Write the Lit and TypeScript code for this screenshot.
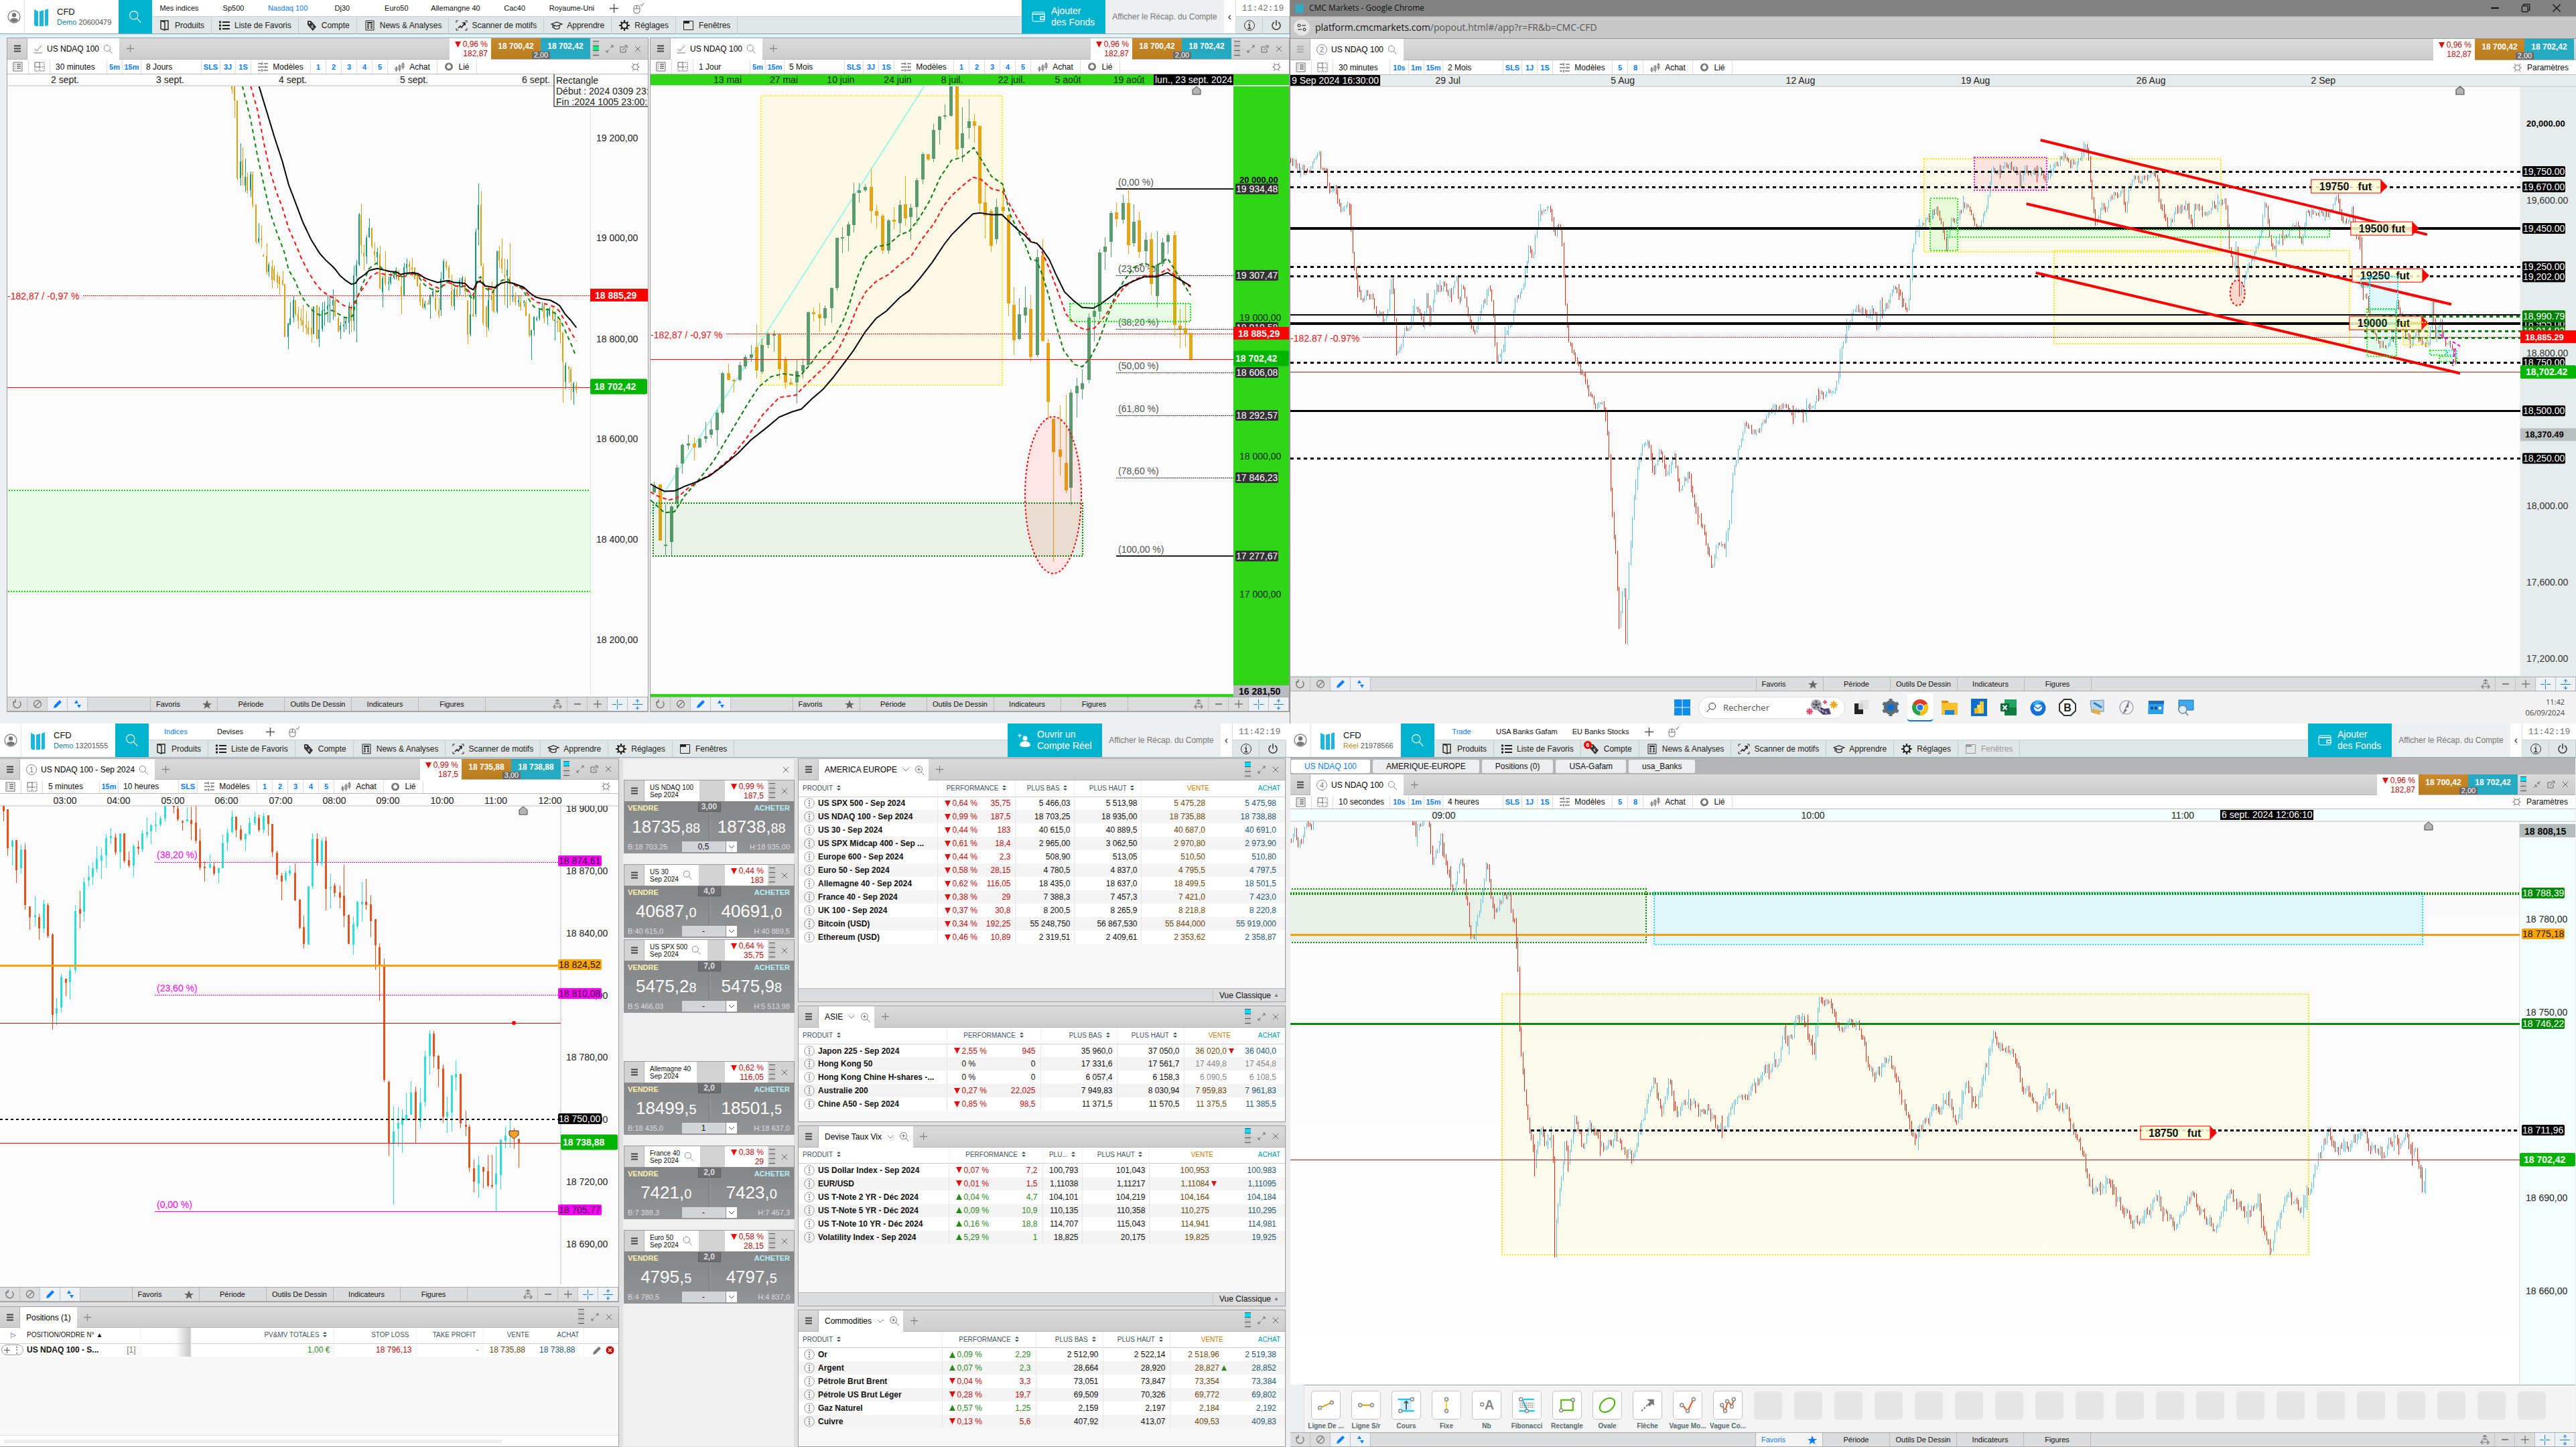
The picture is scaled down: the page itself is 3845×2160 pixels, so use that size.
import { LitElement, html, svg, css, nothing } from "lit";
import { customElement } from "lit/decorators.js";

/* ---------- drawing helpers ---------- */
type Map2 = (x: number, y: number) => [number, number];
const r1 = (n: number) => Math.round(n);

const line = (x1: number, y1: number, x2: number, y2: number, c: string, w = 1, dash = "") =>
  svg`<line x1=${x1} y1=${y1} x2=${x2} y2=${y2} stroke=${c} stroke-width=${w} stroke-dasharray=${dash || nothing} shape-rendering=${y1 === y2 || x1 === x2 ? "crispEdges" : "auto"}></line>`;
const box = (x1: number, y1: number, x2: number, y2: number, fill: string, c = "none", w = 2, op = 0.1) =>
  svg`<rect x=${x1} y=${y1} width=${x2 - x1} height=${y2 - y1} fill=${fill} fill-opacity=${op} stroke=${c} stroke-width=${w} stroke-dasharray="2 2" shape-rendering="crispEdges"></rect>`;
const text = (x: number, y: number, s: string, c = "#222", o: { b?: boolean; a?: string; z?: number } = {}) =>
  svg`<text x=${x} y=${y} fill=${c} font-size=${o.z ?? 14} font-weight=${o.b ? "bold" : "normal"} text-anchor=${o.a ?? "start"}>${s}</text>`;
const tag = (x: number, y: number, s: string, bg: string, c = "#fff", w = 64, h = 16) =>
  svg`<rect x=${x} y=${y - h / 2} width=${w} height=${h} rx="2" fill=${bg}></rect>${text(x + 1, y + 5, s, c)}`;
const bigTag = (x: number, y: number, w: number, s: string, bg: string, c = "#fff", h = 22, pad = 6) =>
  svg`<rect x=${x} y=${y - h / 2} width=${w} height=${h} rx="2" fill=${bg}></rect>${text(x + pad, y + 5, s, c, { b: true })}`;
const curve = (d: string, m: Map2, c: string, dash = "", w = 2) => {
  const pts = d.trim().split(/\s+/).map((p) => {
    const [x, y] = p.split(",").map(Number);
    return m(x, y).map((v) => v.toFixed(1)).join(",");
  }).join(" ");
  return svg`<polyline points=${pts} fill="none" stroke=${c} stroke-width=${w} stroke-dasharray=${dash || nothing}></polyline>`;
};
const marker = (x: number, y: number) =>
  svg`<path d="M${x - 6} ${y + 5}L${x} ${y}L${x + 6} ${y + 5}V${y + 12}H${x - 6}Z" fill="#b4b4b4" stroke="#444" stroke-width="1"></path>`;

/* rows of "x kind high top bottom low" */
const candles = (d: string, m: Map2, colors: Record<string, string>, w: number) => {
  const wick: Record<string, string> = {};
  const body: Record<string, string> = {};
  for (const row of d.trim().split(/\s*[;\n]\s*/)) {
    if (!row) continue;
    const [xs, k, ...v] = row.trim().split(/\s+/);
    const [h, t, b, l] = v.map((n) => r1(m(0, Number(n))[1]));
    const x = r1(m(Number(xs), 0)[0]);
    wick[k] = (wick[k] ?? "") + `M${x + 0.5} ${h}V${l}`;
    body[k] = (body[k] ?? "") + `M${x - Math.floor(w / 2)} ${t}h${w}V${Math.max(b, t + 2)}h${-w}Z`;
  }
  return svg`<g shape-rendering="crispEdges">${Object.keys(wick).map((k) => svg`
    <path d=${wick[k]} stroke=${colors[k]} fill="none"></path><path d=${body[k]} fill=${colors[k]}></path>`)}</g>`;
};

/* one-pixel bars following a list of turning points, with an occasional long bar */
const ticks = (d: string, m: Map2, spread: number, seed: number, step = 2.5) => {
  const pts = d.trim().split(/\s+/).map((p) => { const [x, y] = p.split(",").map(Number); return m(x, y); });
  let s = seed, up = "", down = "", prev = pts[0][1], drift = 0;
  const rnd = () => ((s = (s * 1103515245 + 12345) % 2147483648) / 2147483648);
  let i = 0;
  for (let x = pts[0][0]; x < pts[pts.length - 1][0]; x += step) {
    while (i < pts.length - 2 && x > pts[i + 1][0]) i++;
    const [x0, y0] = pts[i], [x1, y1] = pts[i + 1];
    drift = drift * 0.7 + (rnd() - 0.5) * spread;
    const y = y0 + ((y1 - y0) * (x - x0)) / (x1 - x0) + drift;
    const long = rnd() > 0.88 ? spread : spread * 0.25;
    const a = Math.min(prev, y) - rnd() * long, b = Math.max(prev, y) + rnd() * long;
    const seg = `M${r1(x) + 0.5} ${r1(a)}V${r1(b) + 1}`;
    if (y > prev) down += seg; else up += seg;
    prev = y;
  }
  return svg`<g shape-rendering="crispEdges" fill="none"><path d=${up} stroke="#5cc0e6"></path><path d=${down} stroke="#ee2a12"></path></g>`;
};

/* ---------- icons ---------- */
const ic = (w: number, h: number, body: unknown, vb = `0 0 ${w} ${h}`) =>
  html`<svg class="ic" width=${w} height=${h} viewBox=${vb} fill="none" stroke="currentColor" aria-hidden="true">${body}</svg>`;
const I = {
  user: () => ic(20, 20, svg`<circle cx="10" cy="10" r="9" stroke="#888" stroke-width="1.4"/><circle cx="10" cy="7.5" r="3.2" fill="#777" stroke="none"/><path d="M4 15c1-4 11-4 12 0-3 4-9 4-12 0z" fill="#777" stroke="none"/>`),
  logo: () => ic(22, 26, svg`<g fill="#1bb7dc" stroke="none"><path d="M0 1l6 3v22H2L0 24z"/><path d="M8 4l6-2v24H8z"/><path d="M16 2l5-2v25l-5 1z"/></g>`),
  search: (w = 18) => ic(w, w, svg`<circle cx="7" cy="7" r="5.5"/><path d="M11 11l5.5 6"/>`, "0 0 18 18"),
  zoomIn: () => ic(15, 15, svg`<circle cx="6.5" cy="6.5" r="5"/><path d="M10 10l4.5 5M4 6.5h5M6.500 4v5"/>`),
  mouse: () => ic(17, 17, svg`<rect x="1" y="4" width="9" height="12" rx="4"/><path d="M5.500 4v5M1 9h9M11 3l2 2 3-5" />`),
  book: () => ic(18, 16, svg`<path d="M3 1h11v13H9M3 1l6 2v12l-6-2z" stroke-width="1.4"/>`),
  list: () => ic(18, 16, svg`<path d="M6 3h11M6 8h11M6 13h11" stroke-width="2"/><path d="M1 3h3M1 8h3M1 13h3" stroke-width="3"/>`),
  tagI: () => ic(18, 16, svg`<path d="M3 1h5l8 9-5 6-8-9z" fill="#333" stroke="none"/><circle cx="6" cy="4" r="1.200" fill="#fff" stroke="none"/><path d="M8 8l4 4M11 7l-2 5" stroke="#e0e6e6"/>`),
  news: () => ic(18, 16, svg`<path d="M3 1h12v14H3z"/><path d="M5 4h8" stroke-width="2"/><path d="M5 7h3M10 7h3M5 9.500h3M10 9.500h3M5 12h3M10 12h3" stroke-width="1.500"/>`),
  scan: () => ic(18, 16, svg`<path d="M1 4V1h3M14 1h3v3M17 12v3h-3M4 15H1v-3" /><path d="M4 12l3-3 2 2 5-7M10 4h4v4" stroke-width="1.600"/>`),
  learn: () => ic(18, 16, svg`<path d="M1 6l8-3 8 3-8 3zM5 8v4c2 2 6 2 8 0V8M3 7v5" stroke-width="1.200"/>`),
  gear: (w = 18) => ic(w, 16, svg`<circle cx="9" cy="8" r="4.500" stroke-width="2.200"/><path d="M9 0v3M9 13v3M1 8h3M14 8h3M3.500 2.500l2 2M12.500 11.500l2 2M14.500 2.500l-2 2M5.500 11.500l-2 2" stroke-width="2.200"/>`, "0 0 18 16"),
  gearThin: () => ic(15, 14, svg`<circle cx="7.500" cy="7" r="4"/><path d="M3 1l2 3M12 1l-2 3M3 13l2-3M12 13l-2-3M1 7h2M12 7h2"/>`),
  win: () => ic(18, 16, svg`<path d="M1.500 1.500h14v13h-14z"/><path d="M1 3h9" stroke-width="4"/>`),
  wallet: () => ic(20, 17, svg`<rect x="1" y="1" width="18" height="14" rx="2"/><path d="M1 4h18M13 8h6v4h-6z" stroke-width="1.300"/>`),
  person: () => ic(20, 22, svg`<g fill="#fff" stroke="none"><circle cx="11" cy="8" r="3.500"/><path d="M3 19c0-9 16-9 16 0-4 3-12 3-16 0z"/></g><path d="M3 1v6M0 4h6"/>`),
  info: () => ic(18, 18, svg`<circle cx="9" cy="9" r="7.500"/><path d="M7 7.500h2v6M6.500 13.500h5M8.500 4.500h1.500" stroke-width="1.500"/>`),
  power: () => ic(16, 18, svg`<path d="M5 4a6 6 0 1 0 6 0M8 1v8" stroke-width="1.500"/>`),
  menu: () => ic(10, 11, svg`<path d="M0 1.500h10M0 5.500h10M0 9.500h10" stroke-width="2"/>`),
  check: () => ic(14, 13, svg`<path d="M1 12h12" /><path d="M2 6l3 3 7-8" />`),
  plus: (w = 13) => ic(w, w, svg`<path d="M6.500 0v13M0 6.500h13" stroke-width="1.500"/>`, "0 0 13 13"),
  expand: () => ic(12, 12, svg`<path d="M7 5l4-4M8 1h3v3M5 7l-4 4M1 8v3h3"/>`),
  shrink: () => ic(12, 12, svg`<path d="M7 5l4-4M7 2v3h3M5 7l-4 4M2 7h3v3"/>`),
  pop: () => ic(12, 12, svg`<path d="M7 3H1v8h8V6M4 8l6-6M7 1h4v4"/>`),
  close: () => ic(10, 10, svg`<path d="M1 1l8 8M9 1l-8 8"/>`),
  doc: () => ic(16, 15, svg`<path d="M1 1h13v13H1z"/><path d="M3 4h1M3 7h1M3 10h1M6 4h6M6 7h6M6 10h6" stroke-width="1.300"/>`),
  layout: () => ic(16, 15, svg`<path d="M1 1h7v7H1z"/><path d="M8 1h7v13H1V8M8 8v6M8 8h7" stroke-dasharray="2 1"/>`),
  sliders: () => ic(15, 14, svg`<path d="M0 2h5M9 2h6M0 7h9M12 7h3M0 12h4M8 12h7M6 0v4M11 5v4M6 10v4" stroke-width="1.500"/>`),
  candle: () => ic(15, 14, svg`<path d="M2.500 6v8M1 8h3v4H1zM7.500 3v11M6 5h3v6H6zM12.500 0v11M11 2h3v6h-3z"/>`),
  link: () => ic(14, 13, svg`<circle cx="7" cy="6.500" r="4.500" stroke-width="3"/><path d="M7 6.500V2" stroke="#fff"/>`),
  undo: () => ic(15, 14, svg`<path d="M4 3a5.500 5.500 0 1 0 7 0M5 0v4H1" stroke-width="1.500"/>`),
  ban: () => ic(14, 14, svg`<circle cx="7" cy="7" r="5.500" stroke-width="1.300"/><path d="M11 3l-8 8" stroke-width="1.300"/>`),
  pencil: () => ic(14, 14, svg`<path d="M1 13l1-4 8-8 3 3-8 8z" fill="currentColor" stroke="none"/>`),
  updown: () => ic(12, 14, svg`<path d="M1 6l3-5 3 5zM5 8h6l-3 5z" fill="currentColor" stroke="none"/>`),
  scaleI: () => ic(14, 14, svg`<path d="M7 0v8M4 3l3-3 3 3M3 6h8M1 11h12M4 8l-3 3 3 3M10 8l3 3-3 3" stroke-width="1.200"/>`),
  minus: () => ic(12, 12, svg`<path d="M1 6h10" stroke-width="1.800"/>`),
  cross: () => ic(15, 15, svg`<path d="M7.500 0v6M7.500 9v6M0 7.500h6M9 7.500h6M7 7.500h1"/>`),
  vert: () => ic(15, 15, svg`<path d="M0 7.500h15M7.500 0v5M7.500 10v5M5 3l2.500-3 2.500 3M5 12l2.500 3 2.500-3"/>`),
  star: () => ic(14, 13, svg`<path d="M7 0l2 5h5l-4 3 1.500 5L7 10l-4.500 3L4 8 0 5h5z" fill="currentColor" stroke="none"/>`),
  sort: () => ic(6, 8, svg`<path d="M0 3l3-3 3 3zM0 5h6l-3 3z" fill="currentColor" stroke="none"/>`),
  chev: () => ic(10, 6, svg`<path d="M1 1l4 4 4-4"/>`),
  dots: () => ic(16, 16, svg`<circle cx="8" cy="8" r="7.300" stroke="#999"/><path d="M8 3.500v2M8 7v2M8 10.500v2" stroke="#555" stroke-width="1.500"/>`),
};
const tri = (up: boolean) => ic(9, 9, svg`<path d=${up ? "M4.500 0l4.500 9h-9z" : "M0 0h9l-4.500 9z"} fill=${up ? "#2a8a1a" : "#e01010"} stroke="none"/>`);
const bars = (slot: number, color: string) => ic(9, 24, svg`<rect width="9" height="24" fill="#c6c6c6" stroke="none"/>
  ${slot >= 0 ? svg`<rect y=${slot * 7 + 1} width="9" height="6" fill=${color} stroke="none"/>` : nothing}
  <path d="M0 .5h9M0 7.500h9M0 14.500h9M0 21.500h9" stroke="#555"/>`);

/* ---------- data ---------- */
const OR = "#e0a015", TE = "#169a7c", GR = "#5c9a70", OR2 = "#e6a514";

const C1 = `563 O 372 372 390 407;569 O 372 372 435 512;576 O 437 437 772 780;583 T 621 700 772 803;588 O 640 700 760 805;594 T 688 767 803 832;600 O 750 767 825 838;607 T 744 755 825 853;613 O 744 755 890 900;620 O 885 885 1047 1057;627 T 967 1035 1047 1057;633 O 978 1035 1040 1077;639 O 1100 1105 1108 1110;646 O 1054 1108 1178 1190;652 T 1138 1147 1178 1200;659 O 1127 1155 1214 1248;665 O 1150 1165 1215 1220;672 O 1180 1190 1225 1248;678 O 1195 1200 1230 1278;685 O 1172 1215 1235 1238;691 O 1230 1230 1460 1462;698 T 1400 1402 1460 1512;704 T 1310 1380 1407 1408;711 T 1285 1300 1377 1396;717 O 1300 1300 1362 1370;723 O 1330 1360 1390 1425;730 O 1340 1378 1390 1412;735 O 1322 1387 1410 1440;742 O 1350 1408 1422 1450;748 O 1390 1420 1445 1452;755 O 1330 1420 1450 1484;761 T 1328 1330 1448 1450;768 O 1320 1325 1468 1470;774 T 1330 1430 1468 1503;781 T 1310 1345 1425 1438;787 T 1308 1342 1345 1410;794 T 1285 1325 1342 1396;800 T 1290 1322 1328 1400;807 T 1254 1300 1325 1385;813 O 1290 1300 1370 1375;820 O 1370 1380 1437 1440;826 T 1397 1410 1433 1468;833 T 1370 1408 1412 1440;839 T 1375 1390 1402 1428;846 T 1310 1325 1400 1450;852 O 1320 1330 1390 1440;858 T 1152 1193 1390 1436;865 T 1126 1147 1195 1484;871 T 923 929 1147 1152;876 O 883 932 1063 1100;882 O 1060 1095 1110 1170;889 T 1018 1030 1112 1144;896 T 947 987 1028 1032;902 O 988 988 1070 1078;908 O 1050 1090 1105 1135;915 T 1075 1093 1115 1150;921 O 1066 1100 1250 1255;928 T 1195 1205 1266 1332;935 O 1090 1190 1228 1240;942 T 1200 1222 1228 1260;948 T 1180 1200 1225 1235;955 T 1180 1190 1205 1212;961 T 1160 1170 1190 1212;967 O 1170 1175 1216 1218;973 O 1190 1240 1280 1362;980 T 1140 1160 1278 1285;987 T 1120 1145 1162 1180;993 O 1130 1145 1160 1180;1000 O 1118 1160 1170 1200;1006 O 1160 1160 1210 1212;1012 O 1190 1190 1240 1242;1019 O 1225 1230 1310 1325;1025 O 1290 1295 1332 1338;1031 T 1305 1315 1332 1342;1038 O 1300 1312 1320 1322;1044 T 1275 1285 1318 1382;1050 T 1250 1262 1285 1290;1057 O 1255 1290 1340 1350;1064 O 1290 1345 1367 1380;1070 T 1180 1208 1345 1372;1076 T 1123 1132 1210 1220;1083 O 1130 1135 1160 1172;1089 O 1150 1160 1205 1208;1096 O 1190 1260 1325 1330;1102 T 1245 1255 1327 1345;1109 O 1240 1255 1285 1290;1115 T 1205 1215 1240 1285;1122 T 1195 1205 1235 1240;1128 O 1200 1210 1262 1290;1135 O 1300 1305 1448 1492;1141 T 1270 1363 1448 1458;1148 O 1270 1363 1372 1374;1153 T 990 1005 1363 1375;1160 T 797 890 995 1062;1166 O 828 888 1150 1155;1172 O 1140 1155 1400 1410;1180 O 1325 1330 1418 1460;1185 T 1240 1300 1420 1432;1192 O 1220 1285 1300 1350;1198 O 1240 1255 1350 1355;1205 T 1085 1090 1350 1360;1211 O 1065 1090 1130 1160;1217 O 1035 1120 1165 1185;1224 O 1120 1190 1200 1320;1230 T 1123 1170 1195 1335;1237 O 1055 1200 1230 1325;1243 T 1240 1280 1285 1310;1250 O 1265 1285 1310 1325;1257 T 1280 1300 1310 1330;1263 O 1280 1310 1330 1348;1270 T 1300 1308 1310 1330;1276 O 1300 1310 1370 1372;1283 O 1360 1363 1455 1462;1289 T 1430 1432 1455 1558;1295 T 1370 1375 1432 1455;1302 T 1370 1378 1385 1395;1308 T 1340 1345 1380 1388;1314 T 1310 1335 1342 1350;1320 O 1315 1325 1380 1400;1327 T 1335 1340 1375 1408;1333 T 1330 1340 1365 1372;1340 O 1330 1345 1385 1390;1346 T 1350 1385 1390 1475;1352 O 1370 1390 1400 1440;1358 O 1385 1390 1440 1490;1365 O 1440 1440 1568 1745;1371 T 1570 1584 1656 1687;1379 O 1588 1588 1600 1660;1385 O 1590 1600 1656 1734;1391 T 1656 1660 1698 1753;1397 O 1656 1670 1690 1704`;
const C1K = "628,373 648,490 665,590 685,700 700,800 715,870 735,965 755,1040 775,1097 790,1128 805,1152 812,1165 825,1195 838,1215 852,1232 862,1228 870,1208 885,1190 895,1173 905,1168 915,1164 930,1170 945,1176 962,1180 972,1190 985,1184 1003,1182 1015,1187 1030,1205 1045,1215 1062,1225 1075,1220 1088,1216 1100,1224 1128,1228 1138,1247 1148,1256 1158,1222 1166,1222 1178,1240 1190,1243 1200,1247 1215,1228 1230,1222 1245,1228 1258,1237 1270,1245 1285,1270 1300,1288 1315,1296 1335,1302 1350,1316 1358,1326 1370,1360 1385,1390 1398,1420";
const C1R = "608,373 625,480 640,620 655,740 670,830 685,900 700,990 715,1050 730,1115 748,1180 765,1228 780,1260 800,1285 812,1293 825,1315 838,1328 852,1335 862,1305 870,1275 885,1240 900,1198 915,1182 935,1190 960,1193 975,1202 1000,1187 1012,1190 1030,1215 1048,1238 1065,1250 1088,1224 1105,1240 1128,1240 1140,1270 1148,1280 1158,1225 1166,1215 1180,1250 1198,1255 1215,1228 1230,1222 1250,1238 1270,1250 1285,1285 1300,1310 1325,1318 1345,1330 1355,1345 1370,1390 1385,1440 1398,1478";
const C1G = "588,373 608,520 625,680 640,800 655,920 672,1010 690,1095 700,1170 715,1215 730,1280 745,1320 760,1350 775,1366 790,1360 805,1345 820,1360 838,1378 855,1370 865,1300 880,1230 895,1165 913,1140 930,1170 945,1178 960,1188 975,1200 990,1186 1003,1184 1015,1200 1030,1235 1045,1252 1062,1265 1075,1235 1088,1220 1105,1240 1128,1244 1140,1285 1148,1300 1158,1210 1166,1200 1178,1250 1195,1268 1205,1235 1218,1215 1230,1208 1245,1230 1265,1250 1280,1290 1295,1330 1310,1340 1330,1342 1348,1360 1360,1390 1370,1430 1385,1490 1397,1545";

const C2 = `26 G 2088 2103 2135 2138;40 O 2100 2100 2343 2343;54 G 2188 2361 2368 2408;68 G 2190 2196 2348 2408;82 G 2016 2028 2180 2208;95 G 1923 1928 2011 2053;109 G 1886 1922 1931 1948;123 O 1896 1922 1941 1995;137 G 1900 1902 1940 1940;151 G 1830 1890 1901 1920;164 G 1820 1861 1886 1898;178 G 1778 1790 1863 1933;192 G 1613 1618 1788 1798;206 O 1578 1618 1648 1650;220 O 1640 1646 1650 1701;234 G 1568 1583 1648 1651;247 G 1540 1548 1588 1600;261 G 1495 1536 1550 1568;275 O 1408 1505 1606 1640;288 G 1470 1495 1613 1620;303 G 1440 1448 1495 1510;317 G 1432 1448 1452 1526;330 O 1450 1450 1600 1640;344 O 1545 1560 1658 1685;358 O 1640 1658 1666 1668;372 G 1560 1610 1658 1748;386 G 1555 1583 1608 1640;400 G 1350 1353 1583 1585;413 O 1333 1353 1363 1390;428 O 1312 1362 1378 1437;441 G 1325 1335 1378 1412;456 G 1245 1249 1335 1400;469 G 1030 1032 1248 1260;483 G 985 1027 1035 1098;497 G 962 973 1023 1090;511 G 793 838 975 1008;524 G 793 825 837 877;538 G 800 810 825 830;552 O 730 810 915 968;566 O 888 914 935 990;580 O 925 934 1086 1100;594 G 950 955 1086 1102;608 O 897 952 962 992;622 G 867 890 967 1010;636 O 764 886 947 978;649 G 883 900 942 1040;663 G 773 781 897 977;677 G 660 668 778 800;691 O 668 668 690 696;704 G 536 563 688 702;718 G 503 505 563 628;732 G 453 499 505 518;746 G 374 376 502 504;760 O 374 376 648 680;774 G 465 578 642 702;789 G 430 526 555 600;802 O 494 526 546 618;816 O 543 546 883 915;829 O 795 878 934 1034;844 O 905 915 1065 1092;857 G 862 897 1038 1056;872 O 795 897 915 932;885 O 930 932 1315 1372;899 O 1243 1321 1474 1540;912 G 1292 1362 1468 1474;927 G 1243 1333 1368 1400;940 O 1278 1340 1547 1568;955 G 1080 1115 1540 1548;968 O 1038 1105 1477 1480;982 O 1470 1487 1741 1818;995 O 1815 1815 1960 2433;1011 O 1758 1948 1980 2063;1025 O 1710 2008 2126 2136;1037 G 1688 1703 2113 2190;1052 G 1638 1673 1706 1808;1064 G 1600 1661 1686 1731;1080 G 1360 1376 1646 1660;1093 G 1315 1348 1375 1480;1107 G 1080 1095 1350 1385;1120 G 1028 1070 1092 1170;1135 G 915 923 1048 1116;1148 O 877 920 950 985;1163 G 845 880 952 970;1176 O 820 880 1062 1102;1190 G 885 960 1053 1070;1203 O 918 955 1092 1118;1218 G 1008 1040 1088 1160;1231 O 1008 1037 1230 1282;1246 G 1003 1148 1285 1332;1260 G 1030 1050 1143 1155;1273 G 1010 1020 1048 1100;1288 O 1003 1020 1408 1458;1301 O 1340 1411 1425 1510;1315 O 1318 1423 1445 1503;1328 O 1443 1443 1560 1562`;
const C2K = "18,2098 32,2113 52,2130 76,2128 101,2108 131,2088 161,2063 191,2023 231,1963 261,1908 300,1853 330,1808 360,1786 384,1773 410,1728 436,1688 460,1638 490,1568 510,1520 538,1440 565,1380 590,1348 622,1290 645,1260 672,1205 700,1140 730,1060 748,1018 775,970 800,927 817,923 845,931 870,930 890,965 912,1002 925,1018 940,1048 955,1055 970,1085 985,1125 1000,1185 1022,1265 1045,1305 1065,1333 1092,1336 1112,1315 1140,1278 1162,1242 1190,1218 1215,1200 1245,1200 1272,1182 1300,1210 1328,1240";
const C2R = "18,2133 32,2148 62,2168 82,2158 111,2113 141,2078 171,2048 211,1988 251,1898 290,1798 330,1723 370,1713 400,1658 430,1608 452,1568 475,1510 495,1440 520,1330 540,1265 565,1220 595,1190 622,1148 650,1110 675,1040 705,970 728,895 748,848 775,805 800,768 820,778 845,818 872,830 890,890 912,960 940,1045 960,1060 985,1165 1005,1260 1025,1360 1050,1412 1072,1430 1095,1422 1120,1370 1145,1300 1165,1248 1190,1215 1215,1195 1245,1195 1272,1165 1300,1210 1328,1245";
const C2G = "18,2168 52,2223 76,2218 101,2148 131,2088 171,1998 211,1878 251,1758 280,1678 310,1633 340,1620 380,1630 406,1578 430,1520 460,1475 485,1390 500,1320 520,1200 540,1115 565,1070 595,1060 622,1018 645,1003 670,945 695,870 720,770 748,695 775,680 802,640 830,720 845,765 872,798 890,930 912,1010 928,1065 940,1125 955,1130 970,1200 985,1290 1000,1400 1020,1520 1046,1580 1065,1590 1085,1550 1105,1480 1125,1380 1145,1280 1165,1220 1190,1160 1215,1140 1240,1158 1272,1120 1300,1200 1328,1280";

const C3A = "10,690 30,730 50,760 65,690 78,660 82,720 97,720 100,820 115,830 125,890 135,900 150,910 156,990 163,1150 170,1230 180,1310 192,1260 210,1290 222,1370 240,1400 246,1370 253,1200 258,1260 266,1510 280,1450 300,1400 312,1310 322,1320 332,1400 340,1270 347,1390 360,1250 370,1240 385,1225 392,1290 410,1240 413,1190 418,1340 424,1220 432,1290 445,1360 456,1400 470,1310 485,1270 495,1260 502,1400 508,1560 515,1520 520,1560 530,1450 545,1390 555,1300 573,1290 580,1180 588,1080 598,1140 603,1030 612,930 622,950 632,920 640,940 650,1020 658,970 666,1000 670,1130 676,1330 682,1470 690,1530 700,1560 712,1600 728,1650 750,1740 770,1780 780,1950 788,2200 798,2400 806,2740 818,2500 822,2790 830,2440 845,2120 860,1960 878,1900 890,2060 905,1960 920,2080 940,1990 955,2130 975,2060 990,2180 1010,2280 1030,2440 1045,2360 1060,2400 1075,2280 1080,2080 1095,1940 1110,1860 1135,1900 1155,1850 1175,1790 1200,1760 1240,1770 1280,1740 1310,1700 1330,1680 1345,1530 1350,1480 1358,1400 1370,1350 1400,1350 1415,1360 1430,1360 1433,1480 1440,1330 1443,1400 1455,1340 1470,1280 1478,1265 1490,1300 1505,1340 1512,1240 1516,1060 1525,990 1540,960 1555,930 1565,920 1575,890 1585,940 1595,1000 1598,1060 1610,930 1620,930 1635,890 1650,890 1660,960 1670,980 1685,960 1695,900 1705,780 1710,720 1730,710 1745,690 1760,710 1772,740 1778,800 1788,740 1800,780 1825,740 1840,770 1850,740 1860,700 1870,700 1885,665 1900,710 1915,690 1938,620 1945,700 1950,830 1960,950 1975,900 1995,870 2015,830 2025,830 2032,900 2045,780 2060,790 2075,770 2095,735 2110,790 2115,920 2135,970 2150,930 2175,890 2185,900 2195,980 2200,880 2215,880 2228,940 2240,910 2260,870 2278,900 2285,1090 2295,1150 2302,1050 2307,1280 2325,1200 2345,1100 2360,1000 2372,870 2385,1100 2400,1050 2420,1020 2435,970 2450,980 2458,1060 2472,910 2490,910 2505,930 2520,920 2535,890 2545,865 2560,940 2575,920 2582,890 2590,1010 2603,1010 2607,1240 2618,1280 2625,1400 2640,1480 2655,1500 2670,1520 2685,1480 2690,1300 2700,1350 2710,1440 2725,1480 2750,1450 2770,1520 2777,1300 2785,1480 2795,1390 2810,1500 2825,1490 2837,1580";

const C4A = "1927,1254 1932,1238 1937,1262 1942,1254 1948,1238 1957,1238 1962,1220";
const C4B = "2105,1220 2114,1250 2118,1230 2132,1234 2136,1288 2142,1277 2149,1262 2157,1281 2166,1318 2169,1330 2175,1296 2182,1292 2186,1327 2190,1342 2194,1399 2200,1388 2206,1357 2212,1327 2217,1288 2222,1308 2226,1342 2234,1369 2240,1350 2246,1334 2252,1323 2257,1365 2262,1384 2265,1434 2267,1514 2271,1576 2276,1630 2286,1690 2290,1740 2295,1700 2300,1690 2308,1716 2315,1690 2318,1740 2320,1868 2323,1800 2328,1760 2335,1700 2340,1735 2350,1680 2361,1715 2372,1690 2385,1690 2395,1715 2410,1700 2425,1715 2435,1728 2445,1690 2455,1650 2470,1620 2480,1660 2492,1625 2505,1660 2520,1640 2535,1665 2550,1650 2565,1690 2580,1670 2600,1640 2625,1615 2640,1600 2655,1590 2662,1545 2668,1560 2680,1520 2692,1530 2700,1545 2708,1570 2714,1480 2722,1490 2732,1485 2740,1510 2755,1535 2775,1530 2790,1600 2805,1600 2820,1570 2835,1620 2850,1680 2860,1705 2870,1675 2890,1660 2905,1640 2920,1660 2935,1620 2950,1650 2962,1600 2975,1545 2990,1560 3005,1580 3020,1630 3040,1650 3055,1620 3070,1650 3085,1660 3100,1700 3115,1760 3130,1790 3145,1770 3160,1800 3180,1825 3200,1820 3215,1780 3230,1810 3250,1835 3270,1790 3290,1820 3310,1835 3330,1790 3350,1810 3370,1790 3388,1865 3400,1810 3415,1790 3435,1810 3450,1770 3462,1730 3475,1690 3490,1710 3510,1700 3530,1690 3545,1715 3560,1720 3575,1700 3590,1710 3605,1720 3615,1775 3622,1745";

const C5 = `8 R 489 489 513 557;19 R 503 503 678 710;30 C 640 645 671 755;41 R 642 642 777 833;53 C 663 684 768 792;63 R 657 684 934 954;75 R 939 939 986 1043;87 C 894 978 986 1030;97 R 972 987 1038 1088;109 C 909 927 1037 1060;120 R 924 933 1070 1080;131 R 1059 1065 1425 1490;142 C 1350 1395 1419 1469;154 C 1242 1253 1392 1412;166 R 1263 1263 1282 1340;176 C 1210 1227 1278 1355;188 C 933 960 1224 1239;200 R 870 951 972 1037;210 C 810 830 963 1005;222 C 756 808 822 850;233 C 741 767 807 843;243 C 669 726 772 786;255 C 678 711 734 815;267 C 615 633 710 766;279 C 588 625 633 660;290 R 612 630 696 708;301 C 612 612 695 770;312 R 612 612 735 745;323 R 694 732 756 766;335 C 660 668 756 806;347 R 645 672 681 708;357 C 597 612 684 695;369 C 540 605 618 632;380 C 570 577 603 660;391 C 516 572 576 605;403 C 534 546 573 581;414 C 489 489 547 560;436 R 489 489 495 522;447 R 489 500 550 558;459 R 552 558 561 600;470 C 495 549 558 560;481 R 492 552 570 642;493 R 489 564 645 656;503 R 591 645 765 777;515 R 738 761 765 828;527 C 705 750 765 770;538 R 741 758 792 802;549 C 765 768 789 834;560 C 618 654 768 768;572 C 591 609 651 690;583 C 510 537 605 612;594 R 537 537 597 630;606 R 576 594 639 645;617 C 612 615 640 690;628 C 540 564 614 620;640 C 513 537 567 575;650 R 528 543 597 606;662 C 519 534 597 612;674 R 531 531 570 620;685 R 570 570 696 716;696 R 690 699 798 818;708 R 788 800 828 912;719 C 780 790 818 828;729 C 756 778 792 805;741 R 747 789 912 914;753 R 906 909 1035 1041;763 R 981 1032 1106 1128;775 C 849 849 1109 1109;786 C 612 636 850 861;798 R 612 636 740 756;809 C 633 645 746 758;820 R 627 645 861 957;832 C 795 851 855 948;842 R 834 846 879 896;854 R 846 876 899 948;865 R 753 891 981 1032;876 R 976 978 1106 1106;888 C 987 1017 1109 1155;899 C 915 918 1030 1038;911 C 831 918 930 1005;921 R 816 918 933 955;933 R 888 930 1005 1077;945 R 996 996 1113 1224;955 R 1104 1122 1205 1362;966 R 1173 1205 1715 1724;978 R 1719 1725 2000 2054;989 C 1833 1947 2005 2274;1001 C 1840 1908 1935 2013;1012 C 1849 1885 1917 2042;1022 C 1773 1872 1896 1896;1034 C 1722 1774 1872 1872;1046 R 1746 1770 1895 2000;1057 C 1752 1818 1905 1936;1069 C 1588 1610 1814 1835;1080 C 1494 1510 1608 1692;1091 R 1497 1510 1610 1662;1102 R 1605 1609 1668 1750;1114 R 1647 1664 1881 1907;1125 C 1792 1860 1881 1952;1136 C 1695 1695 1863 1947;1147 C 1629 1688 1703 1764;1159 R 1688 1688 1911 1932;1171 R 1854 1917 1926 1967;1181 R 1917 1925 2108 2126;1192 R 2073 2112 2172 2220;1204 C 2058 2097 2180 2243;1215 R 2106 2106 2126 2203;1227 R 2052 2123 2190 2197;1238 R 2053 2187 2192 2203;1248 C 2013 2135 2184 2305;1260 C 1982 1982 2141 2207;1272 C 1926 1965 1989 2023;1283 C 1895 1955 1967 2018;1294 R 1932 1950 1976 2025;1305 R 1980 1980 1999 2108`;

interface Row { n: string; p: string; v: string; lo: string; hi: string; b: string; a: string; t?: number }
const row = (s: string): Row => { const [n, p, v, lo, hi, b, a, t] = s.split("|"); return { n, p, v, lo, hi, b, a, t: t ? Number(t) : undefined }; };
const LISTS = [
  { name: "AMERICA EUROPE", cls: "l1", cols: [207, 117, 88, 100, 108, 106], bas: "PLUS BAS", foot: true, rows: [
    "US SPX 500 - Sep 2024|-0,64 %|35,75|5 466,03|5 513,98|5 475,28|5 475,98", "US NDAQ 100 - Sep 2024|-0,99 %|187,5|18 703,25|18 935,00|18 735,88|18 738,88",
    "US 30 - Sep 2024|-0,44 %|183|40 615,0|40 889,5|40 687,0|40 691,0", "US SPX Midcap 400 - Sep ...|-0,61 %|18,4|2 965,00|3 062,50|2 970,80|2 973,90",
    "Europe 600 - Sep 2024|-0,44 %|2,3|508,90|513,05|510,50|510,80", "Euro 50 - Sep 2024|-0,58 %|28,15|4 780,5|4 837,0|4 795,5|4 797,5",
    "Allemagne 40 - Sep 2024|-0,62 %|116,05|18 435,0|18 637,0|18 499,5|18 501,5", "France 40 - Sep 2024|-0,38 %|29|7 388,3|7 457,3|7 421,0|7 423,0",
    "UK 100 - Sep 2024|-0,37 %|30,8|8 200,5|8 265,9|8 218,8|8 220,8", "Bitcoin (USD)|-0,34 %|192,25|55 248,750|56 867,530|55 844,000|55 919,000",
    "Ethereum (USD)|-0,46 %|10,89|2 319,51|2 409,61|2 353,62|2 358,87"].map(row) },
  { name: "ASIE", cls: "l2", cols: [221, 140, 114, 100, 77, 74], bas: "PLUS BAS", foot: false, rows: [
    "Japon 225 - Sep 2024|-2,55 %|945|35 960,0|37 050,0|36 020,0|36 040,0|-1", "Hong Kong 50|0 %|0|17 331,6|17 561,7|17 449,8|17 454,8",
    "Hong Kong Chine H-shares -...|0 %|0|6 057,4|6 158,3|6 090,5|6 108,5", "Australie 200|-0,27 %|22,025|7 949,83|8 030,94|7 959,83|7 961,83",
    "Chine A50 - Sep 2024|-0,85 %|98,5|11 371,5|11 570,5|11 375,5|11 385,5"].map(row) },
  { name: "Devise Taux Vix", cls: "l3", cols: [224, 140, 60, 100, 102, 100], bas: "PLU...", foot: true, rows: [
    "US Dollar Index - Sep 2024|-0,07 %|7,2|100,793|101,043|100,953|100,983", "EUR/USD|-0,01 %|1,5|1,11038|1,11217|1,11084|1,11095|-1",
    "US T-Note 2 YR - Déc 2024|+0,04 %|4,7|104,101|104,219|104,164|104,184", "US T-Note 5 YR - Déc 2024|+0,09 %|10,9|110,135|110,358|110,275|110,295",
    "US T-Note 10 YR - Déc 2024|+0,16 %|18,8|114,707|115,043|114,941|114,981", "Volatility Index - Sep 2024|+5,29 %|1|18,825|20,175|19,825|19,925"].map(row) },
  { name: "Commodities", cls: "l4", cols: [214, 140, 100, 100, 87, 85], bas: "PLUS BAS", foot: false, rows: [
    "Or|+0,09 %|2,29|2 512,90|2 522,14|2 518,96|2 519,38", "Argent|+0,07 %|2,3|28,664|28,920|28,827|28,852|1",
    "Pétrole Brut Brent|-0,04 %|3,3|73,051|73,847|73,354|73,384", "Pétrole US Brut Léger|-0,28 %|19,7|69,509|70,326|69,772|69,802",
    "Gaz Naturel|+0,57 %|1,25|2,159|2,197|2,184|2,192", "Cuivre|-0,13 %|5,6|407,92|413,07|409,53|409,83"].map(row) },
];
const TICKETS = [
  ["US NDAQ 100", "0,99 %", "187,5", "3,00", "18735,", "88", "18738,", "88", "18 703,25", "18 935,00", "0,5", "", "lead"],
  ["US 30", "0,44 %", "183", "4,0", "40687,", "0", "40691,", "0", "40 615,0", "40 889,5", "-", "m", "near"],
  ["US SPX 500", "0,64 %", "35,75", "7,0", "5475,2", "8", "5475,9", "8", "5 466,03", "5 513,98", "-", "m", "tight"],
  ["Allemagne 40", "0,62 %", "116,05", "2,0", "18499,", "5", "18501,", "5", "18 435,0", "18 637,0", "1", "", "far"],
  ["France 40", "0,38 %", "29", "2,0", "7421,", "0", "7423,", "0", "7 388,3", "7 457,3", "-", "m", "near"],
  ["Euro 50", "0,58 %", "28,15", "2,0", "4795,", "5", "4797,", "5", "4 780,5", "4 837,0", "-", "m", "near"],
];

/* ---------- shared page parts ---------- */
const topBar = (o: { acc: string; no: string; real?: boolean; tabs: string[]; active: number; cta: [string, string]; person?: boolean; inset?: boolean; badge?: string; dimWin?: boolean }) => html`
  <header class="top ${o.inset ? "inset" : ""}">
    <button class="user" aria-label="Profil">${I.user()}</button>
    <div class="brand ${o.real ? "narrow" : ""}">${I.logo()}<div><div class="cfd">CFD</div><div class="acc"><span class=${o.real ? "real" : "demo"}>${o.acc}</span> ${o.no}</div></div></div>
    <button class="find" aria-label="Rechercher">${I.search(20)}</button>
    <div class="mid">
      <nav class="tabs">${o.tabs.map((t, i) => html`<button class=${i === o.active ? "on" : ""}>${t}</button>`)}
        <button class="add" aria-label="Ajouter">${I.plus(13)}</button><span class="mouse">${I.mouse()}</span></nav>
      <nav class="nav">
        <a href="#">${I.book()}Produits</a><a href="#">${I.list()}Liste de Favoris</a>
        <a href="#">${o.badge ? html`<b class="badge">${o.badge}</b>` : nothing}${I.tagI()}Compte</a>
        <a href="#">${I.news()}News &amp; Analyses</a><a href="#">${I.scan()}Scanner de motifs</a>
        <a href="#">${I.learn()}Apprendre</a><a href="#">${I.gear()}Réglages</a>
        <a href="#" class=${o.dimWin ? "dim" : ""}>${I.win()}Fenêtres</a>
      </nav>
    </div>
    <button class="cta ${o.person ? "wide" : ""}">${o.person ? I.person() : I.wallet()}<span>${o.cta[0]}<br>${o.cta[1]}</span></button>
    <button class="recap">Afficher le Récap. du Compte</button>
    <button class="fold" aria-label="Replier">‹</button>
    <div class="clock"><time>11:42:19</time><div><button aria-label="Informations">${I.info()}</button><button aria-label="Quitter">${I.power()}</button></div></div>
  </header>`;

const chartHead = (o: { name: string; num?: string; pct: string; val: string; bid: string; ask: string; spread: string; slot?: number; color?: string; tools?: boolean; plus?: boolean; full?: boolean }) => html`
  <div class="head">
    <button class="menu ${o.plus === false ? "faint" : ""}" aria-label="Menu">${I.menu()}</button>
    <div class="tab">${o.num ? html`<i class="num">${o.num}</i>` : I.check()}<span>${o.name}</span>${I.search(15)}</div>
    ${o.plus === false ? nothing : html`<button class="plus" aria-label="Ajouter">${I.plus(11)}</button>`}
    <div class="grow"></div>
    <div class="pct"><div>${tri(false)}${o.pct}</div><div>${o.val}</div></div>
    <div class="quotes"><button class="bid">${o.bid}</button><button class="ask">${o.ask}</button><span class="spread">${o.spread}</span></div>
    ${o.tools === false ? html`<div class="end"></div>` : html`<div class="tools">${bars(o.slot ?? -1, o.color ?? "#00dcff")}
      <button aria-label="Agrandir">${o.full ? I.shrink() : I.expand()}</button><button aria-label="Détacher">${I.pop()}</button><button aria-label="Fermer">${I.close()}</button></div>`}
  </div>`;

const toolBar = (o: { tf: string; q1: string[]; range: string; q2: string[]; models: string[]; param?: boolean }) => {
  const q = (s: string) => html`<button class="q ${s.length > 2 ? "q3" : ""}">${s}</button>`;
  return html`<div class="bar">
    <button class="i" aria-label="Liste">${I.doc()}</button><button class="i" aria-label="Disposition">${I.layout()}</button>
    <select class="tf" aria-label="Intervalle"><option>${o.tf}</option></select>${o.q1.map(q)}
    <select class="rg" aria-label="Période"><option>${o.range}</option></select>${o.q2.map(q)}
    <button class="w md">${I.sliders()}Modèles</button>${o.models.map(q)}
    <button class="w ac">${I.candle()}Achat</button><button class="w li">${I.link()}Lié</button>
    <span class="grow"></span><button class="param">${I.gearThin()}${o.param ? html`<span>Paramètres</span>` : nothing}</button>
  </div>`;
};

const footBar = (fav = false) => html`
  <div class="foot">
    <button class="c" aria-label="Réinitialiser">${I.undo()}</button><button class="c" aria-label="Masquer">${I.ban()}</button>
    <button class="c lit" aria-label="Dessiner">${I.pencil()}</button><button class="c lit" aria-label="Échelle">${I.updown()}</button>
    <div class="grow"></div>
    <button class="t ${fav ? "fav" : ""}"><span>Favoris</span>${I.star()}</button>
    ${["Période", "Outils De Dessin", "Indicateurs", "Figures"].map((s) => html`<button class="t">${s}</button>`)}
    <div class="grow"></div>
    <button class="c" aria-label="Ajuster">${I.scaleI()}</button><button class="c" aria-label="Réduire">${I.minus()}</button>
    <button class="c" aria-label="Zoomer">${I.plus(12)}</button><button class="c lit" aria-label="Réticule">${I.cross()}</button><button class="c lit" aria-label="Vertical">${I.vert()}</button>
  </div>`;

/* ---------- charts ---------- */
const chart1 = () => {
  const m: Map2 = (x, y) => [x / 1.625, y / 2.904];
  return svg`<svg class="chart" viewBox="11 111 956 929" preserveAspectRatio="xMinYMin slice" role="img" aria-label="US NDAQ 100, 30 minutes">
    <defs><clipPath id="k1"><rect x="11" y="129" width="870" height="908"/></clipPath></defs>
    <rect x="11" y="111" width="956" height="929" fill="#fcfcfc"/>
    ${line(11, 128, 967, 128, "#ddd", 2)}${line(881, 129, 881, 1037, "#ddd", 1)}
    ${[["2 sept.", 97], ["3 sept.", 254], ["4 sept.", 437], ["5 sept.", 618], ["6 sept.", 800]].map(([s, x]) => text(x as number, 124, s as string, "#222", { a: "middle" }))}
    <g clip-path="url(#k1)">${box(9, 732, 884, 883, "#00ff00", "#00e400", 2, 0.08)}
    ${line(124, 441, 881, 441, "#f00", 1, "2 1")}${line(11, 578, 881, 578, "#f01010", 1)}
    ${candles(C1, m, { O: OR, T: TE }, 2)}
    ${curve(C1G, m, "#0a8a0a", "6 5")}${curve(C1R, m, "#ff1010", "6 5")}${curve(C1K, m, "#000")}</g>
    ${text(11, 447, "-182,87 / -0,97 %", "#f01010")}
    ${[["19 200,00", 206], ["19 000,00", 355], ["18 800,00", 506], ["18 600,00", 655], ["18 400,00", 805], ["18 200,00", 955]].map(([s, y]) => text(890, (y as number) + 5, s as string))}
    <rect x="881" y="431" width="86" height="19" fill="#f00"/>${text(888, 446, "18 885,29", "#fff", { b: true })}
    ${bigTag(881, 577, 85, "18 702,42", "#00b400", "#fff", 23)}
    <path d="M865 127l7 8v6h-14v-6z" fill="#ccc" opacity=".7"/>
    <rect x="827" y="110" width="142" height="49" fill="#fcfcfc" fill-opacity=".8" stroke="#000"/>
    ${text(830, 125, "Rectangle")}${text(830, 141, "Début : 2024 0309 23:")}${text(830, 157, "Fin :2024 1005 23:00:")}
  </svg>`;
};
const chart2 = () => {
  const m: Map2 = (x, y) => [960 + x / 1.625, y / 2.904];
  const fib: [string, number, boolean][] = [["(0,00 %)", 282, true], ["(23,60 %)", 411, false], ["(38,20 %)", 491, false], ["(50,00 %)", 556, false], ["(61,80 %)", 620, false], ["(78,60 %)", 713, false], ["(100,00 %)", 830, true]];
  return svg`<svg class="chart" viewBox="971 111 953 929" preserveAspectRatio="xMinYMin slice" role="img" aria-label="US NDAQ 100, 1 jour">
    <defs><clipPath id="k2"><rect x="971" y="129" width="870" height="907"/></clipPath></defs>
    <rect x="971" y="111" width="953" height="929" fill="#30d518"/>
    <rect x="971" y="127" width="953" height="2" fill="#dce6dc"/>
    <rect x="971" y="129" width="870" height="907" fill="#fcfcfc"/>
    ${[["13 mai", 1086], ["27 mai", 1170], ["10 juin", 1255], ["24 juin", 1340], ["8 juil.", 1421], ["22 juil.", 1510], ["5 août", 1594], ["19 août", 1685]].map(([s, x]) => text(x as number, 124, s as string, "#0b2a06", { a: "middle" }))}
    <rect x="1722" y="111" width="119" height="16" fill="#000"/>${text(1724, 124, "lun., 23 sept. 2024", "#fff")}
    <g clip-path="url(#k2)">
      ${box(1136, 143, 1496, 575, "#ffef4a", "#fbe82a", 2, 0.12)}
      ${fib.map(([, y, s]) => line(1666, y, 1841, y, "#222", s ? 2 : 1, s ? "" : "2 1"))}
      ${fib.map(([s, y]) => text(1669, y - 5, s, "#555"))}
      ${line(971, 767, 1380, 128, "#9ff5e6", 2)}
      ${line(1084, 498, 1841, 498, "#f00", 1, "2 1")}
      ${candles(C2, m, { O: OR2, G: GR }, 5)}
      ${box(975, 751, 1616, 830, "#008000", "#008a00", 2, 0.08)}
      ${line(971, 536, 1841, 536, "#f01010", 1)}
      ${curve(C2G, m, "#0a7a0a", "6 4")}${curve(C2R, m, "#ff1010", "6 4")}${curve(C2K, m, "#000")}
      ${box(1597, 453, 1777, 480, "#00ff00", "#00f000", 2, 0.08)}
      <ellipse cx="1572" cy="739" rx="42" ry="117" fill="#ff2020" fill-opacity=".1" stroke="#f00" stroke-width="2" stroke-dasharray="3 3"/>
    </g>
    ${marker(1786, 129)}
    ${text(971, 505, "-182,87 / -0,97 %", "#f01010")}
    ${text(1850, 273, "20 000,00", "#000", { b: true, z: 13 })}${text(1850, 479, "19 000,00", "#0b2a06")}${text(1850, 686, "18 000,00", "#0b2a06")}${text(1850, 892, "17 000,00", "#0b2a06")}
    ${tag(1844, 282, "19 934,48", "#333")}${tag(1844, 411, "19 307,47", "#333")}${tag(1844, 489, "18 919,58", "#333")}
    ${tag(1844, 556, "18 606,08", "#333")}${tag(1844, 620, "18 292,57", "#333")}${tag(1844, 713, "17 846,23", "#333")}${tag(1844, 830, "17 277,67", "#333")}
    <rect x="1841" y="488" width="83" height="19" fill="#f00"/>${text(1848, 503, "18 885,29", "#fff", { b: true })}
    ${bigTag(1841, 535, 83, "18 702,42", "#00b400", "#fff", 23, 3)}
    <rect x="1841" y="1023" width="83" height="17" fill="#b9b9c0"/>${text(1849, 1037, "16 281,50", "#000", { b: true })}
  </svg>`;
};
const noteTag = (x: number, y: number, w: number, s: string) => svg`
  <rect x=${x} y=${y} width=${w} height="20" fill="#ffffd8" fill-opacity=".85" stroke="#f00" stroke-width="1"/>
  <path d="M${x + w} ${y}l10 10l-10 10z" fill="#f00"/><text class="note" x=${x + 12} y=${y + 16} fill="#111">${s}</text>`;
const chart3 = () => {
  const m: Map2 = (x, y) => [1920 + x / 1.625, y / 2.904];
  const B = "#000";
  return svg`<svg class="chart" viewBox="1926 112 1918 898" preserveAspectRatio="xMinYMin slice" role="img" aria-label="US NDAQ 100, 30 minutes">
    <defs><clipPath id="k3"><rect x="1926" y="129" width="1835" height="879"/></clipPath></defs>
    <rect x="1926" y="112" width="1918" height="898" fill="#e6ecec"/>
    <rect x="1926" y="128" width="1918" height="2" fill="#d4dada"/>
    <rect x="1926" y="130" width="1834" height="878" fill="#fcfcfc"/>
    ${[["29 Jul", 2161], ["5 Aug", 2422], ["12 Aug", 2687], ["19 Aug", 2948], ["26 Aug", 3210], ["2 Sep", 3467]].map(([s, x]) => text(x as number, 125, s as string, "#222", { a: "middle" }))}
    <rect x="1926" y="112" width="134" height="16" fill="#000"/>${text(1928, 125, "9 Sep 2024 16:30:00", "#fff")}
    <g clip-path="url(#k3)">
      ${box(2872, 237, 3314, 376, "#ffef4a", "#fbe82a", 2, 0.1)}${box(3065, 374, 3506, 513, "#ffef4a", "#fbe82a", 2, 0.1)}
      ${box(2946, 235, 3054, 284, "#ff3090", "#ff20e0", 2, 0.1)}
      ${ticks(C3A, m, 14, 7)}
      ${[256, 279, 398, 412, 541, 684].map((y) => line(1926, y, 3761, y, B, 3, "5 5"))}
      ${line(1926, 341, 3761, 341, B, 4)}${line(1926, 470, 3761, 470, B, 2)}${line(1926, 483, 3761, 483, B, 4)}${line(1926, 613, 3761, 613, B, 3)}
      ${line(2034, 503, 3761, 503, "#e01818", 1, "2 1")}${line(1926, 555, 3761, 555, "#e01818", 1)}
      ${box(2881, 296, 2921, 374, "#00ff00", "#20f020", 2, 0.08)}${box(2905, 343, 3476, 354, "#00ff60", "#20f020", 2, 0.08)}
      ${line(3555, 472, 3761, 472, "#008000", 3, "5 5")}${line(3528, 494, 3761, 494, "#008000", 3, "5 5")}${line(3528, 504, 3761, 504, "#008000", 3, "5 5")}
      ${line(3045, 209, 3622, 350, "#f00", 4)}${line(3024, 304, 3658, 454, "#f00", 4)}${line(3038, 407, 3671, 557, "#f00", 4)}
      <ellipse cx="3339" cy="437" rx="11" ry="19" fill="#ff2020" fill-opacity=".15" stroke="#f00" stroke-width="2" stroke-dasharray="3 3"/>
      ${noteTag(3449, 268, 104, "19750   fut")}${noteTag(3508, 331, 92, "19500 fut")}${noteTag(3510, 401, 105, "19250  fut")}${noteTag(3506, 472, 108, "19000   fut")}
      ${box(3536, 413, 3578, 462, "#00d0ff", "#20e0ff", 2, 0.1)}${box(3523, 415, 3536, 428, "#00d0ff", "#20e0ff", 2, 0.1)}
      ${box(3532, 461, 3576, 532, "#00ff60", "#20f020", 2, 0.1)}${box(3586, 481, 3623, 515, "#ffef4a", "#fbe82a", 2, 0.15)}
      ${box(3626, 523, 3652, 530, "#00ff60", "#20f020", 2, 0.1)}${box(3650, 523, 3666, 530, "#00d0ff", "#20e0ff", 2, 0.1)}${box(3640, 532, 3666, 540, "#00ff60", "#20f020", 2, 0.1)}
      <path d="M3641 499l8 6 6 0M3660 510l12 7M3664 520l-4 26" stroke="#f0f" stroke-width="2" fill="none" stroke-dasharray="5 3"/>
    </g>
    ${marker(3671, 129)}
    ${text(1926, 510, "-182.87 / -0.97%", "#f01010")}
    ${text(3770, 189, "20,000.00", "#000", { b: true, z: 13 })}
    ${[["19,600.00", 299], ["18,800.00", 527], ["18,000.00", 755], ["17,600.00", 869], ["17,200.00", 983]].map(([s, y]) => text(3770, (y as number) + 5, s as string, "#333"))}
    ${tag(3764, 256, "19,750.00", B)}${tag(3764, 279, "19,670.00", B)}${tag(3764, 341, "19,450.00", B)}${tag(3764, 398, "19,250.00", B)}${tag(3764, 413, "19,202.00", B)}
    ${tag(3764, 483, "18,955.00", B)}${tag(3764, 494, "18,914.92", "#008000")}${tag(3764, 472, "18,990.79", "#008000", "#fff", 64, 18)}
    ${tag(3764, 541, "18,750.00", B)}${tag(3764, 613, "18,500.00", B)}${tag(3764, 684, "18,250.00", B)}
    <rect x="3761" y="493" width="83" height="19" fill="#f00"/>${text(3768, 508, "18,885.29", "#fff", { b: true, z: 13 })}
    ${bigTag(3761, 555, 83, "18,702.42", "#00b400", "#fff", 20, 8)}
    <rect x="3761" y="639" width="83" height="19" fill="#b9bfbf"/>${text(3768, 653, "18,370.49", "#000", { b: true, z: 13 })}
  </svg>`;
};
const chart4 = () => {
  const m: Map2 = (x, y) => [x, y];
  return svg`<svg class="chart" viewBox="1926 1208 1918 859" preserveAspectRatio="xMinYMin slice" role="img" aria-label="US NDAQ 100, 10 secondes">
    <defs><clipPath id="k4"><rect x="1926" y="1226" width="1835" height="839"/></clipPath>
    <linearGradient id="g4" x1="0" y1="0" x2="0" y2="1"><stop offset="0" stop-color="#fafafa"/><stop offset="1" stop-color="#fff"/></linearGradient></defs>
    <rect x="1926" y="1208" width="1918" height="859" fill="#f3fefd"/>
    <rect x="1926" y="1226" width="1834" height="839" fill="url(#g4)"/>${line(1926, 1226, 3844, 1226, "#ddd", 2)}${line(3760, 1226, 3760, 2065, "#ddd", 1)}
    ${[["09:00", 2155], ["10:00", 2706], ["11:00", 3258]].map(([s, x]) => text(x as number, 1222, s as string, "#222", { a: "middle" }))}
    <rect x="3314" y="1209" width="139" height="15" fill="#000"/>${text(3316, 1221, "6 sept. 2024 12:06:10", "#fff")}
    <g clip-path="url(#k4)">
      ${box(1924, 1327, 2457, 1407, "#008000", "#008a00", 2, 0.08)}${box(2469, 1332, 3616, 1410, "#00d0ff", "#20e0ff", 2, 0.1)}
      ${box(2242, 1484, 3446, 1873, "#ffef4a", "#fbe82a", 2, 0.1)}
      ${line(1926, 1334, 3761, 1334, "#008a00", 4, "2 2")}
      ${line(1926, 1395, 3761, 1395, "#f0a010", 3)}${line(1926, 1528, 3761, 1528, "#0a8a0a", 3)}
      ${ticks(C4A, m, 12, 3)}${ticks(C4B, m, 18, 11)}
      ${line(2285, 1687, 3761, 1687, "#000", 3, "5 4")}${line(1926, 1731, 3761, 1731, "#f01010", 1)}
      ${noteTag(3195, 1681, 104, "18750   fut")}
    </g>
    ${marker(3625, 1227)}
    <rect x="3761" y="1230" width="83" height="20" fill="#b4bcbc"/>${text(3768, 1246, "18 808,15", "#000", { b: true })}
    ${[["18 780,00", 1372], ["18 750,00", 1511], ["18 690,00", 1788], ["18 660,00", 1927]].map(([s, y]) => text(3770, (y as number) + 5, s as string))}
    ${tag(3764, 1333, "18 788,39", "#008a00")}${tag(3764, 1394, "18 775,18", "#ffa500", "#111")}${tag(3764, 1528, "18 746,22", "#008a00")}
    ${tag(3764, 1687, "18 711,96", "#000")}${bigTag(3761, 1731, 83, "18 702,42", "#00b400", "#fff", 20)}
  </svg>`;
};
const chart5 = () => {
  const m: Map2 = (x, y) => [x / 1.686, 1040 + y / 3];
  const M = "#f0f";
  return svg`<svg class="chart" viewBox="0 1185 923 736" preserveAspectRatio="xMinYMin slice" role="img" aria-label="US NDAQ 100 - Sep 2024, 5 minutes">
    <defs><clipPath id="k5"><rect x="0" y="1203" width="923" height="716"/></clipPath></defs>
    <rect x="0" y="1185" width="923" height="736" fill="#fcfcfc"/>${line(0, 1203, 923, 1203, "#ddd", 2)}${line(837, 1204, 837, 1917, "#ddd", 2)}
    ${["03:00", "04:00", "05:00", "06:00", "07:00", "08:00", "09:00", "10:00", "11:00", "12:00"].map((s, i) => text(97 + Math.round(i * 80.400), 1200, s, "#222", { a: "middle" }))}
    <g clip-path="url(#k5)">
      ${line(231, 1287, 833, 1287, M, 1, "2 1")}${line(231, 1485, 833, 1485, M, 1, "2 1")}${line(231, 1808, 833, 1808, M, 1)}
      ${candles(C5, m, { R: "#e4531f", C: "#2ce0de" }, 3)}
      ${line(0, 1441, 833, 1441, "#ffa500", 3)}${line(0, 1527, 837, 1527, "#f00", 1)}<circle cx="767" cy="1527" r="3" fill="#f00"/>
      ${line(0, 1671, 833, 1671, "#000", 2, "4 4")}${line(0, 1706, 837, 1706, "#f01010", 1)}
      ${text(845, 1212, "18 900,00")}
    </g>
    ${text(234, 1281, "(38,20 %)", M)}${text(234, 1480, "(23,60 %)", M)}${text(234, 1803, "(0,00 %)", M)}
    ${marker(781, 1204)}
    <path d="M760 1688h14v6l-7 6-7-6z" fill="#ffa020" stroke="#333"/>
    ${[["18 870,00", 1300], ["18 840,00", 1393], ["18 810,00", 1486], ["18 780,00", 1578], ["18 750,00", 1671], ["18 720,00", 1764], ["18 690,00", 1857]].map(([s, y]) => text(845, (y as number) + 5, s as string))}
    ${tag(833, 1285, "18 874,61", M, "#300030", 65)}${tag(833, 1440, "18 824,52", "#ffa500", "#111", 65)}${tag(833, 1483, "18 810,08", M, "#300030", 65)}
    ${tag(833, 1670, "18 750,00", "#000", "#fff", 65)}${bigTag(837, 1705, 85, "18 738,88", "#00b400", "#fff", 23, 3)}${tag(833, 1806, "18 705,77", M, "#300030", 65)}
  </svg>`;
};

const watchList = (l: (typeof LISTS)[number]) => html`
  <section class="panel ${l.cls}">
    <div class="head">
      <button class="menu" aria-label="Menu">${I.menu()}</button>
      <div class="tab lt"><span>${l.name}</span>${I.chev()}${I.zoomIn()}</div>
      <button class="plus" aria-label="Ajouter">${I.plus(11)}</button><div class="grow"></div>
      <div class="tools sm">${bars(0, "#00dcff")}<button aria-label="Agrandir">${I.expand()}</button><button aria-label="Fermer">${I.close()}</button></div>
    </div>
    <table class="wl">
      <colgroup>${l.cols.map((c) => html`<col style="width:${(c / 726) * 100}%">`)}</colgroup>
      <thead><tr><th class="n">PRODUIT ${I.sort()}</th><th class="ce">PERFORMANCE ${I.sort()}</th><th>${l.bas} ${I.sort()}</th><th>PLUS HAUT ${I.sort()}</th><th class="ve">VENTE</th><th class="ach">ACHAT</th></tr></thead>
      <tbody>${l.rows.map((r) => {
        const s = r.p[0] === "-" ? "dn" : r.p[0] === "+" ? "up" : "flat";
        return html`<tr class=${s === "flat" ? "closed" : ""}>
          <td class="n"><div>${I.dots()}<b>${r.n}</b></div></td>
          <td class="pf ${s}"><div>${s === "flat" ? html`<i></i>` : tri(s === "up")}<span>${s === "flat" ? r.p : r.p.slice(1)}</span><em>${r.v}</em></div></td>
          <td>${r.lo}</td><td>${r.hi}</td>
          <td class="ve">${r.b}${r.t ? html`<span class="mv">${tri(r.t > 0)}</span>` : nothing}</td><td class="ach">${r.a}</td></tr>`;
      })}</tbody>
    </table>
    <div class="void"></div>
    ${l.foot ? html`<div class="lfoot"><button>Vue Classique <span>▲</span></button></div>` : nothing}
  </section>`;

const ticket = (t: string[]) => html`
  <section class="ticket ${t[12]}">
    <div class="th"><button class="menu" aria-label="Menu">${I.menu()}</button>
      <div class="nm"><span>${t[0]}<br>Sep 2024</span>${t[11] ? I.search(15) : nothing}</div><div class="grow"></div>
      <div class="pct"><div>${tri(false)}${t[1]}</div><div>${t[2]}</div></div>${bars(-1, "")}<button class="x" aria-label="Fermer">${I.close()}</button></div>
    <div class="tb">
      <button class="side"><span class="sell">VENDRE</span><span class="pr">${t[4]}<small>${t[5]}</small></span><span class="hl">B:${t[8]}</span></button>
      <button class="side r"><span class="buy">ACHETER</span><span class="pr">${t[6]}<small>${t[7]}</small></span><span class="hl">H:${t[9]}</span></button>
      <span class="sp">${t[3]}</span>
      <span class="qty"><input aria-label="Quantité ${t[0]}" .value=${t[10]}><button aria-label="Choisir">${I.chev()}</button></span>
    </div>
  </section>`;

const pIcon = (b: unknown) => html`<svg width="42" height="42" viewBox="0 0 42 42" fill="none" stroke-width="2" aria-hidden="true">${b}</svg>`;
const nod = (x: number, y: number) => svg`<circle cx=${x} cy=${y} r="2.500" fill="#fff" stroke="#888" stroke-width="1.500"/>`;
const PALETTE: [string, () => unknown][] = [
  ["Ligne De ...", () => pIcon(svg`<path d="M12 25l18-8" stroke="#e0a000"/>${nod(12, 25)}${nod(30, 17)}`)],
  ["Ligne S/r", () => pIcon(svg`<path d="M12 21h18" stroke="#e0a000"/>${nod(12, 21)}${nod(30, 21)}`)],
  ["Cours", () => pIcon(svg`<path d="M12 12h17v18H12z" fill="#c8effc"/><path d="M8 12h20M13 30h20" stroke="#00c0ff"/><path d="M21 28V15M18 18l3-3 3 3" stroke="#555"/>${nod(30, 12)}${nod(12, 30)}`)],
  ["Fixe", () => pIcon(svg`<path d="M21 12v18" stroke="#ffd800"/>${nod(21, 12)}${nod(21, 30)}`)],
  ["Nb", () => pIcon(svg`${nod(14, 20)}<text x="18" y="28" font-size="20" font-weight="bold" fill="#888">A</text>`)],
  ["Fibonacci", () => pIcon(svg`<path d="M14 12l8 18M16 12h16M9 30h24" stroke="#00c0ff"/><path d="M10 18h22M10 21h22M10 24h22" stroke="#666" stroke-width="1" stroke-dasharray="2 1"/>${nod(12, 12)}${nod(21, 30)}`)],
  ["Rectangle", () => pIcon(svg`<path d="M12 13h18v16H12z" stroke="#50b400"/>${nod(30, 13)}${nod(12, 29)}`)],
  ["Ovale", () => pIcon(svg`<ellipse cx="21" cy="21" rx="13" ry="9" transform="rotate(-40 21 21)" stroke="#40b400"/>`)],
  ["Flèche", () => pIcon(svg`<path d="M12 30l12-12" stroke="#777" stroke-dasharray="3 2"/><path d="M20 12h11v10l-3-3-4 4-3-3 4-4z" fill="#777"/>`)],
  ["Vague Mo...", () => pIcon(svg`<path d="M13 21l8 9 9-18" stroke="#ff5010"/>${nod(12, 21)}${nod(21, 30)}${nod(30, 12)}`)],
  ["Vague Co...", () => pIcon(svg`<path d="M12 21l5 9 4-15 6 7 4-10" stroke="#ff5010"/>${nod(12, 21)}${nod(17, 30)}${nod(20, 15)}${nod(27, 23)}${nod(30, 12)}`)],
];

const app = (b: unknown, label: string, on = false) => html`<button class="app ${on ? "on" : ""}" aria-label=${label}><svg width="26" height="26" viewBox="0 0 26 26" aria-hidden="true">${b}</svg></button>`;
const taskbar = () => html`
  <footer class="task">
    ${app(svg`<g fill="#0f8be8"><path d="M1 1h11.500v11.500H1zM13.500 1H25v11.500H13.500zM1 13.500h11.500V25H1zM13.500 13.500H25V25H13.500z"/></g>`, "Démarrer")}
    <label class="seek">${I.search(16)}<input placeholder="Rechercher" aria-label="Rechercher">
      <svg width="52" height="26" viewBox="0 0 52 26" aria-hidden="true"><path d="M16 9l12 6 7-1 3 9-12 1-10-9z" fill="#4d4470"/><path d="M20 15l3 3M25 17l2 3M30 19l1 3" stroke="#cbb" stroke-width="2"/><circle cx="16" cy="9" r="8" fill="#aaa5ba"/><circle cx="16" cy="9" r="2" fill="#444"/><g fill="#555"><circle cx="16" cy="4.500" r="1.500"/><circle cx="12" cy="8" r="1.500"/><circle cx="20" cy="8" r="1.500"/><circle cx="13.500" cy="13" r="1.500"/><circle cx="18.500" cy="13" r="1.500"/></g>
      <g stroke="#f2a61c" stroke-width="2"><path d="M42 3v12M36 9h12M38 5l8 8M46 5l-8 8"/></g><g stroke="#ef4a70" stroke-width="2"><path d="M6 14v10M1 19h10M2.500 15.500l7 7M9.500 15.500l-7 7M29 2v6M26 5h6"/></g></svg></label>
    ${app(svg`<path d="M3 7h13v16H3z" fill="#222"/><path d="M9 2h15v14H9z" fill="#e2e2e2" fill-opacity=".9"/>`, "Vue des tâches")}
    ${app(svg`<circle cx="13" cy="13" r="7.500" fill="none" stroke="#5d6c78" stroke-width="6"/><path d="M13 0v6M13 20v6M1.700 6.500l5 3M19.300 16.500l5 3M1.700 19.500l5-3M19.300 9.500l5-3" stroke="#5d6c78" stroke-width="5"/><circle cx="13" cy="13" r="5" fill="#0a6ecb"/>`, "Paramètres")}
    ${app(svg`<circle cx="13" cy="13" r="12" fill="#2aa54a"/><path d="M13 13L2.600 7A12 12 0 0 1 23.400 7z" fill="#e23b2e"/><path d="M13 13L23.400 7A12 12 0 0 1 13 25z" fill="#fbc116"/><path d="M13 7h11v1H13z" fill="#e23b2e"/><circle cx="13" cy="13" r="5.800" fill="#fff"/><circle cx="13" cy="13" r="4.600" fill="#2c7be5"/>`, "Chrome", true)}
    ${app(svg`<path d="M1 3h9l2 3h13v18H1z" fill="#fbc02d"/><path d="M1 3h9l2 3H1z" fill="#d68a00"/><path d="M6 17h14v7H6z" fill="#1b84d8"/>`, "Explorateur")}
    ${app(svg`<path d="M1 0h24v26H1z" fill="#0b6fd0"/><path d="M14 4h6v18h-6z" fill="#ffc928"/><path d="M10 9h6v13h-6z" fill="#ffd95a"/><path d="M6 14h6v8H6z" fill="#f4b414"/>`, "Power BI")}
    ${app(svg`<path d="M7 1h18v24H7z" fill="#21a366"/><path d="M7 13h18v12H7z" fill="#107c41"/><path d="M1 7h13v12H1z" fill="#0e6b37"/><path d="M4.500 10l6 6.500M10.500 10l-6 6.500" stroke="#fff" stroke-width="2"/>`, "Excel")}
    ${app(svg`<circle cx="13" cy="14" r="11.500" fill="#1670d8"/><path d="M5 9c4-8 13-8 17-3-5-2-8 0-9 3z" fill="#35b5ff"/><path d="M7 11c4-3 9-3 12-1 1 6-2 9-6 9s-7-3-6-8z" fill="#e9f4ff"/><path d="M7 11l6 4 6-5" stroke="#1670d8" stroke-width="1.500" fill="none"/>`, "Thunderbird")}
    ${app(svg`<path d="M8 1h10l7 7v10l-7 7H8l-7-7V8z" fill="#fff" stroke="#333" stroke-width="2"/><text x="13" y="19" font-size="16" font-weight="bold" text-anchor="middle" fill="#222">B</text>`, "B")}
    ${app(svg`<path d="M3 3l20-1v17l-18 1z" fill="#b8d7ee" stroke="#7790a8"/><path d="M8 6l12 7" stroke="#2a7cc7" stroke-width="3"/><path d="M6 15l12 3v6l-12-3z" fill="#e3aa4a"/>`, "Bureau")}
    ${app(svg`<circle cx="13" cy="13" r="10" fill="none" stroke="#aab" stroke-width="1.500"/><path d="M17 2l-6 12 3 3-7 7 4-10 5-1z" fill="#778"/>`, "Plume")}
    ${app(svg`<path d="M2 3h23l-1 20H1z" fill="#2ba0e6"/><path d="M2 3h23v5H2z" fill="#1c6fb8"/><path d="M5 12h4v4H5zM11 12h4v4h-4z" fill="#0b4f94"/><path d="M17 12h4v4h-4z" fill="#fff"/>`, "Fenêtres")}
    ${app(svg`<path d="M3 2h22v15H3z" fill="#3ea8ea" stroke="#1b74b4"/><circle cx="9" cy="16" r="6" fill="#e2eef6" stroke="#789" stroke-width="1.500"/><path d="M13 20l4 5" stroke="#789" stroke-width="2"/>`, "Loupe")}
    <div class="date">11:42<br>06/09/2024</div>
  </footer>`;

@customElement("app-root")
export class AppRoot extends LitElement {
  static styles = css`
    :host { display: block; height: 100vh; overflow: hidden; background: #edeff0; color: #111; font: 12px/14px "Liberation Sans", Arial, sans-serif; }
    * { box-sizing: border-box; }
    button, input, select { font: inherit; color: inherit; border: 0; background: none; padding: 0; margin: 0; border-radius: 0; outline: 0; }
    button { white-space: nowrap; display: flex; align-items: center; justify-content: center; }
    select { appearance: none; }
    a { color: inherit; text-decoration: none; }
    .ic { flex: none; display: block; }
    .grow { flex: 1; }
    .page { display: grid; grid-template-rows: 1fr 1fr; height: 100%; }
    .line { display: grid; min-height: 0; }
    .line.a { grid-template-columns: 1925fr 1920fr; }
    .line.b { grid-template-columns: 1920fr 1925fr; }
    .quad { display: flex; flex-direction: column; min-width: 0; min-height: 0; overflow: hidden; }
    .chart { flex: 1 1 0; min-height: 0; width: 100%; display: block; }
    .note { font-size: 16px; font-weight: bold; white-space: pre; }

    .top { display: flex; height: 51px; background: #fff; border-bottom: 1px solid #8fa6b8; flex: none; }
    .user { width: 37px; padding-left: 5px; border-right: 1px solid #e4e4e4; }
    .inset .user { width: 32px; padding-left: 0; }
    .brand { display: flex; align-items: center; gap: 12px; padding-left: 14px; width: 140px; }
    .brand.narrow { width: 134px; }
    .brand .ic { margin-top: 2px; }
    .cfd { font-size: 13px; line-height: 16px; }
    .acc { font-size: 11px; line-height: 14px; color: #555; white-space: nowrap; }
    .demo { color: #0a7f98; } .real { color: #b98a12; }
    .find { width: 50px; background: #00b2ce; color: #fff; flex: none; }
    .mid { flex: 1; display: flex; flex-direction: column; min-width: 0; }
    .tabs { display: flex; height: 25px; border-bottom: 1px solid #c9d0d2; flex: none; font-size: 11px; }
    .tabs button { min-width: 81px; padding: 0 11px; }
    .tabs .on { color: #0a7cff; }
    .tabs .add { min-width: 38px; color: #555; padding: 0; }
    .mouse { display: flex; align-items: center; padding-left: 9px; color: #777; }
    .nav { display: flex; flex: 1; background: #e1e7e7; }
    .nav a { position: relative; display: flex; align-items: center; gap: 6px; padding: 0 10px; border-right: 1px solid #c6cccc; color: #222; white-space: nowrap; }
    .nav a.dim { color: #999; }
    .badge { position: absolute; left: 4px; top: 1px; width: 12px; height: 12px; border-radius: 6px; background: #e00; color: #fff; font-size: 9px; line-height: 12px; text-align: center; }
    .cta { width: 125px; background: #00b2ce; color: #fff; font-size: 14px; line-height: 17px; gap: 9px; text-align: left; flex: none; justify-content: flex-start; padding-left: 15px; }
    .cta.wide { width: 141px; }
    .recap { width: 177px; background: #edeff1; color: #777; flex: none; }
    .fold { width: 18px; background: #fff; color: #333; font-size: 16px; border-right: 1px solid #ddd; flex: none; }
    .clock { width: 80px; display: flex; flex-direction: column; flex: none; }
    .clock time { height: 25px; line-height: 26px; text-align: center; font-family: "Liberation Mono", monospace; font-size: 13px; color: #777; border-bottom: 1px solid #c9d0d2; }
    .clock div { flex: 1; display: flex; background: #e1e7e7; color: #333; }
    .clock button { flex: 1; border-right: 1px solid #c6cccc; }

    .work { flex: 1; display: flex; gap: 4px; padding: 6px 1px 18px 11px; min-height: 0; background: linear-gradient(#dff3fb 0 6px, #edeff0 6px); }
    .panel { display: flex; flex-direction: column; min-width: 0; min-height: 0; background: #fcfcfc; box-shadow: 0 0 0 1px #a0a0a0; overflow: hidden; }
    .p1 { flex: 956 0 0; } .p2 { flex: 953 0 0; }
    .head { display: flex; height: 32px; border-bottom: 1px solid #b4b4b4; background: linear-gradient(#dadada, #cdcdcd); flex: none; position: relative; }
    .short .head { height: 31px; }
    .menu { width: 30px; color: #444; border-right: 1px solid #b4b4b4; flex: none; }
    .menu.faint { color: #aaa; }
    .tab { display: flex; align-items: center; background: #fff; padding: 0 9px 0 9px; gap: 6px; color: #777; height: 32px; white-space: nowrap; }
    .tab span { color: #000; }
    .num { font-style: normal; width: 16px; height: 16px; border: 1px solid #888; border-radius: 8px; font-size: 11px; line-height: 14px; text-align: center; }
    .tab.lt { gap: 8px; padding: 0 6px 0 9px; }
    .plus { width: 32px; color: #888; }
    .pct { width: 62px; background: #fff; color: #c00d0d; padding: 2px 5px 0 0; text-align: right; line-height: 13px; height: 32px; flex: none; }
    .pct div { display: flex; align-items: center; justify-content: flex-end; gap: 3px; height: 14px; }
    .quotes { display: flex; position: relative; flex: none; }
    .quotes button { width: 74px; color: #fff; font-weight: bold; align-items: flex-start; padding-top: 5px; }
    .bid { background: linear-gradient(#c98a2c, #b97c1c); }
    .ask { background: #26aac2; }
    .spread { position: absolute; left: 61px; bottom: 0; width: 27px; height: 11px; background: #6a6a6a; color: #fff; font-size: 11px; line-height: 11px; text-align: center; border-radius: 2px 2px 0 0; }
    .tools { width: 86px; display: flex; align-items: center; justify-content: space-between; padding: 0 10px 0 4px; color: #666; flex: none; }
    .tools.sm { width: 70px; padding: 0 9px 0 10px; }
    .end { width: 3px; }
    .bar { display: flex; height: 22px; border-bottom: 1px solid #bbb; background: #fff; flex: none; color: #111; }
    .short .bar { height: 21px; }
    .bar > button, .bar > select { border-right: 1px solid #ddd; }
    .bar .i { width: 32px; color: #666; }
    .bar .tf { width: 85px; padding-left: 8px; } .bar .rg { width: 90px; padding-left: 7px; }
    .bar .q { width: 23px; color: #0a7cff; font-weight: bold; font-size: 11px; } .bar .q3 { width: 28px; }
    .bar .w { gap: 7px; } .bar .w .ic { color: #777; }
    .md { width: 89px; } .ac { width: 74px; } .li { width: 59px; }
    .bar .param { border: 0; gap: 7px; padding-right: 11px; color: #777; } .param span { color: #111; }

    .foot { display: flex; height: 22px; background: #dbdcde; border-top: 1px solid #a9a9a9; border-bottom: 1px solid #a9a9a9; flex: none; font-size: 11px; }
    .foot .c { width: 30px; border-right: 1px solid #c0c0c0; color: #777; }
    .foot .lit { background: #eef2f6; color: #0a7cff; }
    .foot .t { width: 100px; border-left: 1px solid #b8b8b8; box-shadow: 1px 0 0 #b8b8b8; gap: 0; }
    .foot .t .ic { margin-left: 33px; color: #666; }
    .foot .fav, .foot .fav .ic { background: #f4f4f4; color: #0a7cff; }

    .desk { border-left: 1px solid #888; }
    .title { height: 24px; background: #828282; display: flex; align-items: center; gap: 7px; padding: 0 22px 0 7px; font: 12px/16px "Open Sans", sans-serif; color: #111; flex: none; }
    .title .ic { width: 14px; height: 14px; }
    .title .wc { display: flex; gap: 32px; align-items: center; }
    .url { height: 34px; background: #c8c8c8; border-top: 1px solid #a4a4a4; border-bottom: 1px solid #999; display: flex; align-items: center; gap: 8px; padding-left: 5px; font: 14px/18px "Open Sans", sans-serif; color: #111; flex: none; }
    .url i { width: 24px; height: 24px; border-radius: 12px; background: #e6e6e6; display: grid; place-items: center; }
    .url em { font-style: normal; color: #555; }
    .task { height: 48px; background: #f3f3f3; display: flex; align-items: center; padding-left: 563px; flex: none; position: relative; }
    .app { width: 44px; height: 42px; }
    .app.on { background: #fff; border-radius: 4px; box-shadow: inset 0 -3px 0 -1px #0a76d4; width: 38px; margin: 0 3px; }
    .seek { width: 219px; height: 33px; border-radius: 16px; background: #fff; border: 1px solid #dcdcdc; display: flex; align-items: center; gap: 10px; padding: 0 6px 0 10px; margin: 0 2px; font: 13px/18px "Open Sans", sans-serif; }
    .seek .ic { transform: scaleX(-1); }
    .seek input { flex: 1; min-width: 0; } .seek input::placeholder { color: #555; opacity: 1; }
    .date { margin-left: auto; padding-right: 17px; text-align: right; color: #444; font: 11px/16px "Open Sans", sans-serif; }

    .ws { height: 25px; background: #b4b5b7; display: flex; gap: 4px; align-items: center; padding-left: 1px; flex: none; }
    .ws button { height: 20px; background: #eceef0; border-radius: 3px; padding: 0 20px; font-size: 12px; }
    .ws .on { background: #fff; color: #0a7cff; }
    .body4 { flex: 1; display: flex; flex-direction: column; min-height: 0; padding: 0 1px 0 6px; }
    .pal { height: 71px; background: #f4f4f4; border-top: 1px solid #9aa; display: flex; gap: 16px; padding: 8px 0 0 10px; flex: none; overflow: hidden; position: relative; margin-left: 20px; border-left: 1px solid #ddd; }
    .pal button { width: 44px; flex-direction: column; justify-content: flex-start; gap: 4px; color: #5a6a6c; font-weight: bold; font-size: 10px; line-height: 12px; flex: none; }
    .pal svg { border: 1px solid #c4c4c4; border-radius: 5px; background: #fff; width: 44px; height: 43px; flex: none; }
    .pal i { width: 42px; height: 42px; border-radius: 5px; background: #e6e6e6; flex: none; margin: 1px; }

    .b3 { flex: 1; display: grid; grid-template-columns: 923fr 255fr 726fr; gap: 7px; padding: 2px 2px 1px 0; background: #e1e1e1; min-height: 0; }
    .colA { display: grid; grid-template-rows: 810fr 208fr; gap: 8px; min-height: 0; }
    .colB { background: #f0f0f0; padding-left: 2px; min-height: 0; }
    .colB > .shut { height: 32px; width: 24px; margin-left: auto; color: #666; }
    .colC { display: grid; grid-template-rows: 362fr 171fr 268fr 203fr; gap: 7px; min-height: 0; }
    table { border-collapse: collapse; table-layout: fixed; width: 100%; flex: none; background: #fff; }
    th { font-size: 10px; font-weight: normal; color: #46545c; text-align: right; padding: 0 10px 0 0; white-space: nowrap; overflow: hidden; height: 24px; }
    th .ic { display: inline-block; margin-left: 3px; }
    thead tr { border-bottom: 1px solid #ccc; }
    th.n { text-align: left; padding-left: 6px; } th.ce { text-align: center; padding: 0; }
    td { text-align: right; padding: 0 6px 0 0; height: 20px; white-space: nowrap; border-left: 1px solid #e6e6e6; }
    th:not(:first-child) { border-left: 1px solid #eee; }
    .wl .n { border: 0; text-align: left; } td.n div { display: flex; align-items: center; gap: 5px; padding-left: 8px; overflow: hidden; }
    .wl tbody tr:nth-child(even) { background: #f4f4f4; }
    .pf div { display: flex; align-items: center; gap: 3px; padding-left: 10px; } .pf i { width: 9px; } .pf em { font-style: normal; margin-left: auto; padding-right: 1px; }
    .dn { color: #c00d0d; } .up { color: #2a8a1a; }
    td.ve { color: #6b4a0a; padding-right: 13px; position: relative; } td.ach { color: #1d5a72; padding-right: 13px; border: 0; }
    th.ve { color: #cc7a00; padding-right: 7px; } th.ach { color: #009ab0; padding-right: 7px; border: 0 !important; }
    .closed .ve, .closed .ach { color: #888; }
    .mv { position: absolute; right: 2px; top: 6px; } .mv .ic { width: 8px; height: 8px; }
    .void { flex: 1; background: #f8f8f8; }
    .lfoot { height: 20px; background: #dbdcde; border-top: 1px solid #bbb; display: flex; justify-content: flex-end; flex: none; }
    .lfoot button { width: 108px; border-left: 1px solid #c4c4c4; gap: 4px; } .lfoot span { font-size: 8px; color: #777; }
    .pos th { color: #46545c; height: 23px; } .pos th:first-child { text-align: center; padding: 0; } .pos .lft { text-align: left; color: #111; padding: 0; }
    .pos td { border-color: #eee; }
    .pos td.lft { font-weight: bold; } .pos .lft span { float: right; font-weight: normal; color: #777; padding-right: 6px; }
    .pos td:nth-child(1), .pos td:nth-child(2), .pos th:nth-child(2) { border: 0; }
    .pos .shade { background: linear-gradient(90deg, #fff 70%, #c4c4c4); }
    .pos .act button { display: inline-flex; color: #777; vertical-align: middle; margin-left: 6px; }
    .pill { display: flex; width: 33px; height: 16px; border: 1px solid #999; border-radius: 8px; margin-left: 2px; }
    .pill { gap: 4px; color: #555; }
    .track { height: 17px; background: #fff; border-top: 1px solid #ddd; flex: none; padding: 6px 0 0 6px; } .track div { height: 5px; width: 81%; background: #ecedf0; }

    .ticket { height: 108px; box-shadow: 0 0 0 1px #999; }
    .ticket.near { margin-top: 18px; } .ticket.tight { margin-top: 4px; } .ticket.far { margin-top: 74px; }
    .th { display: flex; height: 32px; background: #d2d2d2; align-items: center; border-bottom: 1px solid #888; }
    .th .menu { height: 100%; }
    .nm { background: #fff; height: 100%; display: flex; align-items: center; gap: 6px; padding: 0 9px 0 8px; font-size: 10px; line-height: 11px; color: #777; } .nm span { color: #111; }
    .th .pct { width: 64px; height: 31px; padding-right: 6px; margin-right: 2px; }
    .x { width: 28px; color: #666; }
    .tb { position: relative; height: 76px; display: flex; background: linear-gradient(#858688, #929395); color: #fff; }
    .side { flex: 1; flex-direction: column; align-items: stretch; justify-content: space-between; padding: 4px 6px 3px 5px; text-align: left; border-right: 1px solid #6e6f71; }
    .side.r { text-align: right; border: 0; border-left: 1px solid #a4a5a7; }
    .sell, .buy { font-size: 11px; font-weight: bold; line-height: 11px; color: #fbf0b0; } .buy { color: #b8f0f4; }
    .pr { font-size: 26px; line-height: 28px; text-align: center; } .pr small { font-size: 20px; }
    .hl { font-size: 11px; line-height: 12px; color: #dedfe1; }
    .sp { position: absolute; left: 50%; top: 0; width: 34px; height: 15px; margin-left: -17px; background: #6e6f72; color: #ddd; font-weight: bold; text-align: center; line-height: 14px; border: 1px solid #5a5b5d; border-top: 0; }
    .qty { position: absolute; left: 50%; margin-left: -41px; bottom: 1px; width: 82px; height: 16px; display: flex; gap: 1px; }
    .qty input { width: 65px; background: #d4d5d8; color: #111; text-align: center; } .qty button { width: 16px; background: #fff; color: #555; }
  `;

  private positions() {
    return html`<section class="panel short">
      <div class="head"><button class="menu" aria-label="Menu">${I.menu()}</button><div class="tab"><span>Positions (1)</span></div>
        <button class="plus" aria-label="Ajouter">${I.plus(11)}</button><div class="grow"></div>
        <div class="tools sm">${bars(-1, "")}<button aria-label="Agrandir">${I.expand()}</button><button aria-label="Fermer">${I.close()}</button></div></div>
      <table class="pos">
        <colgroup>${[40, 169, 77, 213, 122, 100, 76, 75, 51].map((c) => html`<col style="width:${(c / 923) * 100}%">`)}</colgroup>
        <thead><tr><th>▷</th><th class="lft">POSITION/ORDRE N° ▲</th><th class="shade"></th><th>PV&amp;MV TOTALES ${I.sort()}</th><th>STOP LOSS</th><th>TAKE PROFIT</th><th class="ve">VENTE</th><th class="ach">ACHAT</th><th></th></tr></thead>
        <tbody><tr><td><button class="pill" aria-label="Détails">${I.plus(9)}⋮</button></td><td class="lft">US NDAQ 100 - S...<span>[1]</span></td><td class="shade"></td><td class="up">1,00 €</td><td class="dn">18 796,13</td><td class="up">-</td><td class="ve">18 735,88</td><td class="ach">18 738,88</td>
          <td class="act"><button aria-label="Modifier">${I.pencil()}</button><button aria-label="Clôturer">${ic(13, 13, svg`<circle cx="6.500" cy="6.500" r="6" fill="#c00" stroke="none"/><path d="M4 4l5 5M9 4l-5 5" stroke="#fff" stroke-width="1.500"/>`)}</button></td></tr></tbody>
      </table>
      <div class="void"></div><div class="track"><div></div></div>
    </section>`;
  }

  render() {
    const nq = { pct: "0,96 %", val: "182,87", bid: "18 700,42", ask: "18 702,42", spread: "2,00" };
    const five = ["1", "2", "3", "4", "5"];
    return html`<main class="page">
      <div class="line a">
        <div class="quad">
          ${topBar({ acc: "Demo", no: "20600479", tabs: ["Mes indices", "Sp500", "Nasdaq 100", "Dj30", "Euro50", "Allemangne 40", "Cac40", "Royaume-Uni"], active: 2, cta: ["Ajouter", "des Fonds"] })}
          <div class="work">
            <section class="panel p1">${chartHead({ name: "US NDAQ 100", ...nq, slot: 1, color: "#00f080" })}
              ${toolBar({ tf: "30 minutes", q1: ["5m", "15m"], range: "8 Jours", q2: ["SLS", "3J", "1S"], models: five })}${chart1()}${footBar()}</section>
            <section class="panel p2">${chartHead({ name: "US NDAQ 100", ...nq })}
              ${toolBar({ tf: "1 Jour", q1: ["5m", "15m"], range: "5 Mois", q2: ["SLS", "3J", "1S"], models: five })}${chart2()}${footBar()}</section>
          </div>
        </div>
        <div class="quad desk">
          <div class="title">${I.logo()}<span>CMC Markets - Google Chrome</span><span class="grow"></span>
            <span class="wc">${I.minus()}${ic(11, 11, svg`<rect x="1" y="3" width="7" height="7" rx="1"/><path d="M3 3V1h7v7H8"/>`)}${I.close()}</span></div>
          <div class="url"><i>${ic(14, 12, svg`<circle cx="3" cy="3" r="2"/><path d="M7 3h6M1 9h6"/><circle cx="11" cy="9" r="2"/>`)}</i><span>platform.cmcmarkets.com<em>/popout.html#/app?r=FR&amp;b=CMC-CFD</em></span></div>
          ${chartHead({ name: "US NDAQ 100", num: "2", ...nq, tools: false, plus: false })}
          ${toolBar({ tf: "30 minutes", q1: ["10s", "1m", "15m"], range: "2 Mois", q2: ["SLS", "1J", "1S"], models: ["5", "8"], param: true })}
          ${chart3()}${footBar()}${taskbar()}
        </div>
      </div>
      <div class="line b">
        <div class="quad">
          ${topBar({ acc: "Demo", no: "13201555", tabs: ["Indices", "Devises"], active: 0, cta: ["Ouvrir un", "Compte Réel"], person: true, inset: true })}
          <div class="b3">
            <div class="colA">
              <section class="panel short">${chartHead({ name: "US NDAQ 100 - Sep 2024", num: "1", pct: "0,99 %", val: "187,5", bid: "18 735,88", ask: "18 738,88", spread: "3,00", slot: 0 })}
                ${toolBar({ tf: "5 minutes", q1: ["15m"], range: "10 heures", q2: ["SLS"], models: five })}${chart5()}${footBar()}</section>
              ${this.positions()}
            </div>
            <div class="colB"><button class="shut" aria-label="Fermer">${I.close()}</button>${TICKETS.map(ticket)}</div>
            <div class="colC">${LISTS.map(watchList)}</div>
          </div>
        </div>
        <div class="quad short">
          ${topBar({ acc: "Réel", no: "21978566", real: true, tabs: ["Trade", "USA Banks Gafam", "EU Banks Stocks"], active: 0, cta: ["Ajouter", "des Fonds"], badge: "6", dimWin: true })}
          <div class="body4">
            <nav class="ws">${["US NDAQ 100", "AMERIQUE-EUROPE", "Positions (0)", "USA-Gafam", "usa_Banks"].map((s, i) => html`<button class=${i ? "" : "on"}>${s}</button>`)}</nav>
            ${chartHead({ name: "US NDAQ 100", num: "4", ...nq, slot: 0, full: true })}
            ${toolBar({ tf: "10 secondes", q1: ["10s", "1m", "15m"], range: "4 heures", q2: ["SLS", "1J", "1S"], models: ["5", "8"], param: true })}
            ${chart4()}
            <div class="pal">${PALETTE.map(([s, d]) => html`<button>${d()}${s}</button>`)}${Array.from({ length: 20 }, () => html`<i></i>`)}</div>
            ${footBar(true)}
          </div>
        </div>
      </div>
    </main>`;
  }
}
